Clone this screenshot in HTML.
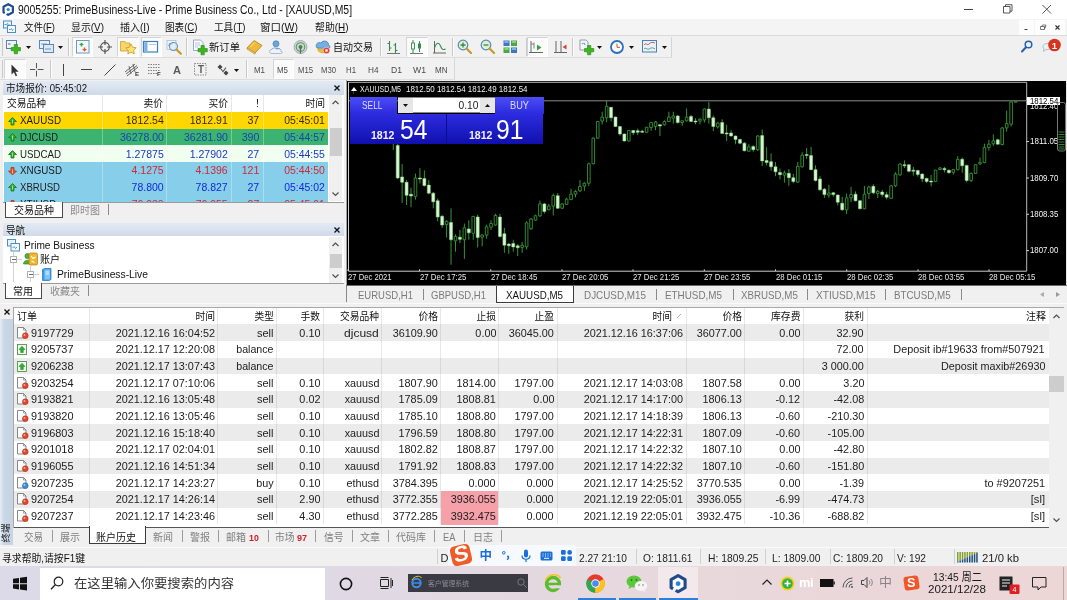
<!DOCTYPE html><html lang="zh-CN"><head><meta charset="utf-8"><title>MT4</title><style>
*{box-sizing:border-box;margin:0;padding:0}
html,body{width:1067px;height:600px;overflow:hidden;background:#f0f0f0}
body{font-family:"Liberation Sans","Noto Sans CJK SC",sans-serif;font-size:11px;color:#000;position:relative}
.a{position:absolute;white-space:nowrap}
.t{position:absolute;white-space:nowrap;line-height:1}
svg{position:absolute;overflow:visible}
svg text{font-family:"Liberation Sans","Noto Sans CJK SC",sans-serif}
</style></head><body><div id="w" style="position:absolute;left:0;top:0;width:1067px;height:600px;will-change:transform">
<div class="a" style="left:0px;top:0px;width:1067px;height:19px;background:#ffffff;"></div>
<svg class="a" style="left:2px;top:2.8px;width:12.4px;height:13px;" viewBox="0 0 12.4 13"><path d="M6.20 1.10L10.88 3.80L10.88 9.20L6.20 11.90L1.52 9.20L1.52 3.80z" fill="#fff" stroke="#1f4a8c" stroke-width="2.2" stroke-linejoin="round"/><path d="M5.20 8.10L2.17 12.95" stroke="#ffffff" stroke-width="2.09"/><path d="M5.20 8.10L3.86 10.24" stroke="#fff" stroke-width="2.09"/><circle cx="6.2" cy="6.5" r="1.625" fill="#2b82d9"/></svg>
<div class="t" style="top:3.7px;font-size:12px;color:#111;left:17.6px;transform:scaleX(0.865);transform-origin:left;">9005255: PrimeBusiness-Live - Prime Business Co., Ltd - [XAUUSD,M5]</div>
<svg class="a" style="left:960px;top:0px;width:107px;height:19px;" viewBox="0 0 107 19"><path d="M4 9.5h9" stroke="#444" stroke-width="1" fill="none"/><path d="M43.5 6.5h6.5v6.5h-6.5z M45.5 6.5v-1.8h6.5v6.5h-2" stroke="#444" stroke-width="0.9" fill="none"/><path d="M82.5 5l8.5 8.5m0-8.5l-8.5 8.5" stroke="#444" stroke-width="0.9" fill="none"/></svg>
<div class="a" style="left:0px;top:19px;width:1067px;height:17px;background:#f4f4f4;border-bottom:1px solid #dadada"></div>
<svg class="a" style="left:3px;top:20px;width:13px;height:14px;" viewBox="0 0 13 14"><rect x="0.5" y="1" width="8" height="7" fill="#eaf3fb" stroke="#4d8fcb" stroke-width="1"/><rect x="4.5" y="5.5" width="8" height="7" fill="#f4f9fd" stroke="#4d8fcb" stroke-width="1"/><path d="M1.5 4.5h2l1-1 1 2 1-1M6 9.5h1.5l1-1 1 2 1-1" stroke="#2c6fb3" stroke-width=".7" fill="none"/></svg>
<div class="t" style="top:21.5px;font-size:10.5px;color:#111;left:24px;transform:scaleX(0.901);transform-origin:left;">文件(<u>F</u>)</div>
<div class="t" style="top:21.5px;font-size:10.5px;color:#111;left:71px;transform:scaleX(0.942);transform-origin:left;">显示(<u>V</u>)</div>
<div class="t" style="top:21.5px;font-size:10.5px;color:#111;left:120px;transform:scaleX(0.954);transform-origin:left;">插入(<u>I</u>)</div>
<div class="t" style="top:21.5px;font-size:10.5px;color:#111;left:165px;transform:scaleX(0.913);transform-origin:left;">图表(<u>C</u>)</div>
<div class="t" style="top:21.5px;font-size:10.5px;color:#111;left:214px;transform:scaleX(0.915);transform-origin:left;">工具(<u>T</u>)</div>
<div class="t" style="top:21.5px;font-size:10.5px;color:#111;left:260px;">窗口(<u>W</u>)</div>
<div class="t" style="top:21.5px;font-size:10.5px;color:#111;left:314.5px;transform:scaleX(0.941);transform-origin:left;">帮助(<u>H</u>)</div>
<div class="a" style="left:1019px;top:20px;width:15px;height:15px;background:#fdfdfd;"></div>
<div class="a" style="left:1035px;top:20px;width:15px;height:15px;background:#fdfdfd;"></div>
<div class="a" style="left:1050px;top:20px;width:15px;height:15px;background:#fdfdfd;"></div>
<svg class="a" style="left:1019px;top:20px;width:48px;height:15px;" viewBox="0 0 48 15"><path d="M5.5 9.5h3" stroke="#444" stroke-width="1"/><path d="M21.5 6.5h4v3h-4z M22.5 6.5l1-1.5h3.5l-.8 3h-1" stroke="#444" stroke-width=".7" fill="none"/><path d="M36.5 5.5l4 4m0-4l-4 4" stroke="#333" stroke-width="1.1"/></svg>
<div class="a" style="left:0px;top:36px;width:1067px;height:22px;background:#f0f0f0;"></div>
<div class="a" style="left:0px;top:36px;width:672px;height:22px;background:#f1f1f1;border-bottom:1px solid #dddddd"></div>
<div class="a" style="left:2px;top:38px;width:1px;height:18px;background:#c9c9c9;"></div>
<div class="a" style="left:671px;top:37px;width:1px;height:20px;background:#d5d5d5;"></div>
<svg class="a" style="left:6px;top:40px;width:16px;height:14px;" viewBox="0 0 16 14"><rect x="0.5" y="0.5" width="10" height="8" fill="#eef4fa" stroke="#5b7fa6"/><path d="M2 3h2.5v2H2z" fill="#5b7fa6" opacity=".6"/><path d="M7 6h3.5v-0h0v3.5h3.5v3.5h-3.5v0h0v0h0h-3.5v0h0v-0h-0z" fill="none"/><path d="M8.2 4.5h3.3v3h3v3.3h-3v3h-3.3v-3h-3v-3.3h3z" fill="#3cb521" stroke="#1f8a0f" stroke-width=".6"/></svg>
<svg class="a" style="left:26px;top:46px;width:5px;height:3px;" viewBox="0 0 5 3"><path d="M0 0h5l-2.5 3z" fill="#111"/></svg>
<svg class="a" style="left:39px;top:40px;width:16px;height:14px;" viewBox="0 0 16 14"><rect x="0.5" y="0.5" width="10" height="8" fill="#e9f1f9" stroke="#5b86b5"/><rect x="4.5" y="4.5" width="10" height="8" fill="#dce9f5" stroke="#5b86b5"/><path d="M2 4h6M6 9h6" stroke="#5b86b5" stroke-width=".8"/></svg>
<svg class="a" style="left:58px;top:46px;width:5px;height:3px;" viewBox="0 0 5 3"><path d="M0 0h5l-2.5 3z" fill="#111"/></svg>
<div class="a" style="left:68px;top:38px;width:1px;height:18px;background:#c8c8c8;"></div>
<div class="a" style="left:69px;top:38px;width:1px;height:18px;background:#fdfdfd;"></div>
<div class="a" style="left:72px;top:37px;width:21px;height:20px;background:#fbfbfb;border:1px solid #d4d4d4;border-right-color:#fff;border-bottom-color:#fff"></div>
<svg class="a" style="left:76px;top:40px;width:14px;height:14px;" viewBox="0 0 14 14"><rect x="0.5" y="0.5" width="12.5" height="12.5" fill="#f3f8fc" stroke="#6c9bc9"/><path d="M3 5l2.5-2.5L8 5H6.3v1.5H4.7V5z" fill="#3aa935"/><path d="M6 9l2.500 2.5L11 9H9.300V7.500H7.700V9z" fill="#e2562b"/></svg>
<svg class="a" style="left:98px;top:40px;width:14px;height:14px;" viewBox="0 0 14 14"><circle cx="7" cy="7" r="4.3" fill="none" stroke="#555" stroke-width="1.2"/><path d="M7 0v5M7 9v5M0 7h5M9 7h5" stroke="#555" stroke-width="1.2"/></svg>
<div class="a" style="left:117px;top:37px;width:22px;height:20px;background:#fbfbfb;border:1px solid #d4d4d4;border-right-color:#fff;border-bottom-color:#fff"></div>
<svg class="a" style="left:120px;top:39px;width:17px;height:15px;" viewBox="0 0 17 15"><path d="M0.5 2.500h4.500l1 1.500h4v8h-9.500z" fill="#f7d56b" stroke="#c9a227" stroke-width=".8"/><path d="M11 5l1.600 3.300 3.600.500-2.600 2.500.600 3.600-3.200-1.700-3.200 1.700.600-3.600-2.600-2.500 3.600-.500z" fill="#fbe27a" stroke="#c59a1c" stroke-width=".8"/></svg>
<div class="a" style="left:141px;top:37px;width:21px;height:20px;background:#fbfbfb;border:1px solid #d4d4d4;border-right-color:#fff;border-bottom-color:#fff"></div>
<svg class="a" style="left:143px;top:41px;width:16px;height:12px;" viewBox="0 0 16 12"><rect x="0.5" y="0.5" width="14" height="10.500" fill="#ffffff" stroke="#3f7fbe" stroke-width="1.2"/><rect x="1.2" y="1.2" width="3.300" height="9.200" fill="#7fb2e0"/><path d="M6 3.500h7" stroke="#9fb9d3" stroke-width=".8"/></svg>
<svg class="a" style="left:166px;top:40px;width:17px;height:15px;" viewBox="0 0 17 15"><rect x="1" y="0.500" width="9" height="9" fill="#eef4fa" stroke="#a9bfd6" stroke-width=".8"/><path d="M2.500 6l1.500-3 1.500 2 1.500-3" stroke="#4f86c0" stroke-width=".8" fill="none"/><circle cx="7.500" cy="6.500" r="4" fill="#d9ecfb" fill-opacity=".6" stroke="#6b8fb5" stroke-width="1.100"/><path d="M10.500 9.500l4.300 4.300" stroke="#c89a2e" stroke-width="2.200" stroke-linecap="round"/></svg>
<div class="a" style="left:186px;top:38px;width:1px;height:18px;background:#c8c8c8;"></div>
<div class="a" style="left:187px;top:38px;width:1px;height:18px;background:#fdfdfd;"></div>
<svg class="a" style="left:192px;top:39px;width:16px;height:16px;" viewBox="0 0 16 16"><path d="M1.500 1h7l2.500 2.500v8h-9.500z" fill="#fafcfe" stroke="#7f99b5" stroke-width=".8"/><path d="M3 4h5M3 6h5M3 8h3" stroke="#9ab1c9" stroke-width=".7"/><path d="M9 6.500h3.300v3h3v3.300h-3v3h-3.300v-3h-3v-3.300h3z" fill="#3cb521" stroke="#1f8a0f" stroke-width=".6"/></svg>
<div class="t" style="top:41.5px;font-size:10.5px;color:#111;left:209px;transform:scaleX(0.984);transform-origin:left;">新订单</div>
<svg class="a" style="left:246px;top:40px;width:17px;height:14px;" viewBox="0 0 17 14"><path d="M1 8l7-7.500 8 5-7 7.500z" fill="#f0b93a" stroke="#b07d12" stroke-width=".8"/><path d="M1 8l8 5v1.200l-8-5z" fill="#fff4cf" stroke="#b07d12" stroke-width=".6"/><path d="M4.500 7l4.500-4.800" stroke="#fbe08a" stroke-width="1"/></svg>
<svg class="a" style="left:269px;top:40px;width:16px;height:14px;" viewBox="0 0 16 14"><circle cx="7" cy="3.800" r="3" fill="#6ea6dc" stroke="#3b78b8" stroke-width=".7"/><path d="M2.500 9.500c0-2.500 9-2.500 9 0v1.500h-9z" fill="#4f8fd0"/><path d="M3 13.500c-3.500 0-3.500-4 0-4 .5-2 4-2 4.500-.3 3-1.200 5 .8 4.500 2.300 2 0 2 2-.5 2z" fill="#eef3f8" stroke="#8ea4bb" stroke-width=".7"/></svg>
<svg class="a" style="left:293px;top:40px;width:15px;height:14px;" viewBox="0 0 15 14"><circle cx="7.500" cy="7" r="6.500" fill="#cfd5da" stroke="#8d979f" stroke-width=".7"/><circle cx="7.500" cy="7" r="4.300" fill="none" stroke="#5d9c5a" stroke-width="1.100"/><circle cx="7.500" cy="7" r="2" fill="#3f8f3c"/><path d="M7.500 7v6.500" stroke="#5a646c" stroke-width="1.200"/></svg>
<svg class="a" style="left:315px;top:39px;width:16px;height:15px;" viewBox="0 0 16 15"><path d="M2 9c-2.500-3 1-7 4-5 2-3.500 8-2 7.500 2 2.500 1 1.500 4-1 3.500z" fill="#74aee6" stroke="#3c78b8" stroke-width=".7"/><path d="M3 8.500c2 3 8 3 10.500 0v3c-2 3-8.500 3-10.500 0z" fill="#f2c230" stroke="#b68a12" stroke-width=".6"/><circle cx="11.500" cy="11.500" r="3.300" fill="#e03a2a" stroke="#fff" stroke-width=".5"/><rect x="10.300" y="10.300" width="2.400" height="2.400" fill="#fff"/></svg>
<div class="t" style="top:41.5px;font-size:10.5px;color:#111;left:333px;transform:scaleX(0.952);transform-origin:left;">自动交易</div>
<div class="a" style="left:380px;top:38px;width:1px;height:18px;background:#c8c8c8;"></div>
<div class="a" style="left:381px;top:38px;width:1px;height:18px;background:#fdfdfd;"></div>
<svg class="a" style="left:387px;top:40px;width:13px;height:14px;" viewBox="0 0 13 14"><path d="M2.500 1v10M2.500 3.500h-2M2.500 8h2M8.500 3v10M8.500 5h-2M8.500 10.500h2" stroke="#2f8f4a" stroke-width="1.100" fill="none"/><path d="M0 13.500h13" stroke="#555" stroke-width=".8"/></svg>
<div class="a" style="left:406px;top:37px;width:22px;height:20px;background:#fbfbfb;border:1px solid #d4d4d4;border-right-color:#fff;border-bottom-color:#fff"></div>
<svg class="a" style="left:410px;top:40px;width:14px;height:14px;" viewBox="0 0 14 14"><path d="M3 0v13M9.500 1v11" stroke="#2f8f4a" stroke-width="1"/><rect x="1.500" y="3" width="3" height="6" fill="#fff" stroke="#2f8f4a" stroke-width=".9"/><rect x="8" y="3.500" width="3" height="5" fill="#2f8f4a"/><path d="M0 13.500h13" stroke="#555" stroke-width=".8"/></svg>
<svg class="a" style="left:433px;top:40px;width:14px;height:14px;" viewBox="0 0 14 14"><path d="M1.500 1v12M0 13h13" stroke="#555" stroke-width=".9" fill="none"/><path d="M1.500 8c2-6 4.500-6 6-2s3 4 5 3" stroke="#2f8f4a" stroke-width="1.100" fill="none"/></svg>
<div class="a" style="left:452px;top:38px;width:1px;height:18px;background:#c8c8c8;"></div>
<div class="a" style="left:453px;top:38px;width:1px;height:18px;background:#fdfdfd;"></div>
<svg class="a" style="left:457px;top:39px;width:16px;height:16px;" viewBox="0 0 16 16"><circle cx="6" cy="6" r="4.800" fill="#dff0d8" stroke="#5b86b5" stroke-width="1.200"/><path d="M3.500 6h5M6 3.500v5" stroke="#2f8f3a" stroke-width="1.300"/><path d="M9.800 9.800l4.200 4.200" stroke="#c89a2e" stroke-width="2.300" stroke-linecap="round"/></svg>
<svg class="a" style="left:480px;top:39px;width:16px;height:16px;" viewBox="0 0 16 16"><circle cx="6" cy="6" r="4.800" fill="#dff0d8" stroke="#5b86b5" stroke-width="1.200"/><path d="M3.500 6h5" stroke="#2f8f3a" stroke-width="1.300"/><path d="M9.800 9.800l4.200 4.200" stroke="#c89a2e" stroke-width="2.300" stroke-linecap="round"/></svg>
<svg class="a" style="left:503px;top:40px;width:15px;height:14px;" viewBox="0 0 15 14"><rect x="0.500" y="0.500" width="6" height="5.500" fill="#3a78c2"/><rect x="8" y="0.500" width="6" height="5.500" fill="#4aa83f"/><rect x="0.500" y="7.500" width="6" height="5.500" fill="#4aa83f"/><rect x="8" y="7.500" width="6" height="5.500" fill="#3a78c2"/><path d="M1.500 2h4M9 2h4M1.500 9h4M9 9h4" stroke="#fff" stroke-width=".8"/></svg>
<div class="a" style="left:526px;top:38px;width:1px;height:18px;background:#c8c8c8;"></div>
<div class="a" style="left:527px;top:38px;width:1px;height:18px;background:#fdfdfd;"></div>
<div class="a" style="left:526.5px;top:37px;width:21.5px;height:20px;background:#fbfbfb;border:1px solid #d4d4d4;border-right-color:#fff;border-bottom-color:#fff"></div>
<svg class="a" style="left:529px;top:40px;width:14px;height:14px;" viewBox="0 0 14 14"><path d="M2 1v11M0 12.500h14" stroke="#555" stroke-width=".9" fill="none"/><path d="M2 4h3M5 2.500v6" stroke="#666" stroke-width=".8"/><path d="M8 4.500l4.500 3-4.500 3z" fill="#2fa83a"/></svg>
<svg class="a" style="left:554px;top:40px;width:13px;height:14px;" viewBox="0 0 13 14"><path d="M2 1v11M0 12.500h13M7 1v11" stroke="#555" stroke-width=".9" fill="none"/><path d="M12.500 4.500l-4 2.500 4 2.500z" fill="#d0452f"/></svg>
<div class="a" style="left:572px;top:38px;width:1px;height:18px;background:#c8c8c8;"></div>
<div class="a" style="left:573px;top:38px;width:1px;height:18px;background:#fdfdfd;"></div>
<svg class="a" style="left:579px;top:39px;width:15px;height:16px;" viewBox="0 0 15 16"><path d="M1 1h6l2 2v8h-8z" fill="#f4f6f8" stroke="#7d8b99" stroke-width=".8"/><path d="M3 4c1 3 2-3 3 2" stroke="#3b78b8" stroke-width=".8" fill="none"/><path d="M8.500 6.500h3.300v3h3v3.300h-3v3h-3.300v-3h-3v-3.300h3z" fill="#3cb521" stroke="#1f8a0f" stroke-width=".6"/></svg>
<svg class="a" style="left:597px;top:46px;width:5px;height:3px;" viewBox="0 0 5 3"><path d="M0 0h5l-2.5 3z" fill="#111"/></svg>
<svg class="a" style="left:610px;top:40px;width:14px;height:14px;" viewBox="0 0 14 14"><circle cx="7" cy="7" r="6" fill="#fff" stroke="#2d6fc0" stroke-width="1.800"/><path d="M7 3.500v3.800h3" stroke="#c0392b" stroke-width=".9" fill="none"/></svg>
<svg class="a" style="left:629px;top:46px;width:5px;height:3px;" viewBox="0 0 5 3"><path d="M0 0h5l-2.5 3z" fill="#111"/></svg>
<svg class="a" style="left:642px;top:40px;width:15px;height:13px;" viewBox="0 0 15 13"><rect x="0.500" y="0.500" width="14" height="11.500" fill="#e8f0f8" stroke="#4a7fb8" stroke-width="1"/><path d="M2 5c2-3 3 1 5-1s3-2 6-1" stroke="#c0392b" stroke-width=".8" fill="none"/><path d="M2 9c2-2 3 1 5 0s3-2 6 0" stroke="#2f8f4a" stroke-width=".8" fill="none"/></svg>
<svg class="a" style="left:661.5px;top:46px;width:5px;height:3px;" viewBox="0 0 5 3"><path d="M0 0h5l-2.5 3z" fill="#111"/></svg>
<svg class="a" style="left:1021px;top:40px;width:12px;height:13px;" viewBox="0 0 12 13"><circle cx="7.500" cy="4.500" r="3.300" fill="#e9f1fb" stroke="#2b5fae" stroke-width="1.500"/><path d="M5 7.300l-4 4.200" stroke="#2b5fae" stroke-width="2" stroke-linecap="round"/></svg>
<svg class="a" style="left:1042px;top:38px;width:21px;height:16px;" viewBox="0 0 21 16"><path d="M1 8.500c0-4 8-4 8 0 0 2.500-3 3.500-5 3l-2.500 2 .500-2.600c-.700-.600-1-1.400-1-2.400z" fill="#eef1f4" stroke="#9aa7b3" stroke-width=".7"/><circle cx="12.500" cy="7" r="6.300" fill="#d8331f"/><text x="12.500" y="10.500" font-size="9.500" font-weight="bold" text-anchor="middle" fill="#fff">1</text></svg>
<div class="a" style="left:0px;top:58px;width:1067px;height:23px;background:#f0f0f0;"></div>
<div class="a" style="left:0px;top:58px;width:455px;height:22px;background:#f1f1f1;border-bottom:1px solid #dddddd;border-right:1px solid #d8d8d8"></div>
<div class="a" style="left:2px;top:60px;width:1px;height:18px;background:#c9c9c9;"></div>
<div class="a" style="left:4px;top:59px;width:22px;height:20px;background:#fbfbfb;border:1px solid #d4d4d4;border-right-color:#fff;border-bottom-color:#fff"></div>
<svg class="a" style="left:10.5px;top:63.5px;width:9px;height:14px;" viewBox="0 0 9 14"><path d="M0.500 0.500v10l2.400-2.200 1.800 3.900 1.500-.700-1.800-3.800h3.300z" fill="#333"/></svg>
<svg class="a" style="left:30px;top:63px;width:14px;height:14px;" viewBox="0 0 14 14"><path d="M6.500 0v5.300M6.500 7.700v5.800M0 6.500h5.300M7.700 6.500h5.800" stroke="#555" stroke-width="1"/></svg>
<div class="a" style="left:50px;top:60px;width:1px;height:18px;background:#c8c8c8;"></div>
<div class="a" style="left:51px;top:60px;width:1px;height:18px;background:#fdfdfd;"></div>
<div class="a" style="left:63px;top:64px;width:1px;height:12px;background:#444;"></div>
<div class="a" style="left:81px;top:69px;width:11px;height:1px;background:#444;"></div>
<svg class="a" style="left:104px;top:64px;width:12px;height:12px;" viewBox="0 0 12 12"><path d="M0.500 11.500l11-11" stroke="#444" stroke-width="1"/></svg>
<svg class="a" style="left:125px;top:63px;width:14px;height:14px;" viewBox="0 0 14 14"><path d="M0 9l10-8M2 13l11-9M1 11l11-8.500" stroke="#555" stroke-width=".9"/><path d="M4 3l2 8M8 1l2 8" stroke="#555" stroke-width=".8"/></svg>
<div class="t" style="top:70.5px;font-size:6px;color:#333;font-weight:bold;left:135px;">E</div>
<svg class="a" style="left:148px;top:63px;width:13px;height:13px;" viewBox="0 0 13 13"><path d="M0 1.500h12M0 4.500h12M0 7.500h12M0 10.500h9" stroke="#666" stroke-width=".8" stroke-dasharray="1.500 1"/></svg>
<div class="t" style="top:71px;font-size:6px;color:#333;font-weight:bold;left:157px;">F</div>
<div class="t" style="top:64.5px;font-size:11px;color:#5a5a5a;font-weight:bold;left:173px;transform:scaleX(1.006);transform-origin:left;">A</div>
<svg class="a" style="left:194px;top:63px;width:13px;height:13px;" viewBox="0 0 13 13"><rect x="0.500" y="0.500" width="11.500" height="11.500" fill="none" stroke="#777" stroke-width=".8" stroke-dasharray="1.500 1"/></svg>
<div class="t" style="top:65px;font-size:10px;color:#5a5a5a;font-weight:bold;left:197.5px;transform:scaleX(0.982);transform-origin:left;">T</div>
<svg class="a" style="left:217px;top:64px;width:12px;height:12px;" viewBox="0 0 12 12"><path d="M3 0.500l2.500 2.500-2.500 2.500-2.500-2.500z" fill="#444"/><path d="M9 6.500l2.500 2.500-2.500 2.500-2.500-2.500z" fill="#444"/><path d="M4 5l2 2.500 3-4" stroke="#555" stroke-width="1.100" fill="none"/></svg>
<svg class="a" style="left:234px;top:68.5px;width:5px;height:3px;" viewBox="0 0 5 3"><path d="M0 0h5l-2.5 3z" fill="#111"/></svg>
<div class="a" style="left:246px;top:60px;width:1px;height:18px;background:#c8c8c8;"></div>
<div class="a" style="left:247px;top:60px;width:1px;height:18px;background:#fdfdfd;"></div>
<div class="a" style="left:273px;top:59px;width:21px;height:20px;background:#fbfbfb;border:1px solid #d4d4d4;border-right-color:#fff;border-bottom-color:#fff"></div>
<div class="t" style="top:65.5px;font-size:8.5px;color:#4a4a4a;left:254px;transform:scaleX(0.931);transform-origin:left;">M1</div>
<div class="t" style="top:65.5px;font-size:8.5px;color:#4a4a4a;left:277px;transform:scaleX(0.931);transform-origin:left;">M5</div>
<div class="t" style="top:65.5px;font-size:8.5px;color:#4a4a4a;left:298px;transform:scaleX(0.907);transform-origin:left;">M15</div>
<div class="t" style="top:65.5px;font-size:8.5px;color:#4a4a4a;left:321px;transform:scaleX(0.907);transform-origin:left;">M30</div>
<div class="t" style="top:65.5px;font-size:8.5px;color:#4a4a4a;left:346px;transform:scaleX(0.920);transform-origin:left;">H1</div>
<div class="t" style="top:65.5px;font-size:8.5px;color:#4a4a4a;left:367.5px;transform:scaleX(0.966);transform-origin:left;">H4</div>
<div class="t" style="top:65.5px;font-size:8.5px;color:#4a4a4a;left:391px;transform:scaleX(1.011);transform-origin:left;">D1</div>
<div class="t" style="top:65.5px;font-size:8.5px;color:#4a4a4a;left:413px;transform:scaleX(1.020);transform-origin:left;">W1</div>
<div class="t" style="top:65.5px;font-size:8.5px;color:#4a4a4a;left:435px;transform:scaleX(0.945);transform-origin:left;">MN</div>
<div class="a" style="left:3px;top:81px;width:341px;height:13.5px;background:linear-gradient(#e3eaf4,#cfdae8);"></div>
<div class="t" style="top:83px;font-size:10.5px;color:#111;left:6px;transform:scaleX(0.913);transform-origin:left;">市场报价: 05:45:02</div>
<svg class="a" style="left:334px;top:85px;width:6px;height:6px;" viewBox="0 0 6 6"><path d="M0.500 0.500l5 5m0-5l-5 5" stroke="#111" stroke-width="1.300"/></svg>
<div class="a" style="left:3px;top:94.5px;width:341px;height:107.5px;background:#ffffff;"></div>
<div class="t" style="top:98.2px;font-size:10.5px;color:#111;left:7px;transform:scaleX(0.929);transform-origin:left;">交易品种</div>
<div class="t" style="top:98.2px;font-size:10.5px;color:#111;right:904px;transform:scaleX(0.929);transform-origin:right;">卖价</div>
<div class="t" style="top:98.2px;font-size:10.5px;color:#111;right:839.5px;transform:scaleX(0.929);transform-origin:right;">买价</div>
<div class="t" style="top:98.2px;font-size:10.5px;color:#111;left:256px;">!</div>
<div class="t" style="top:98.2px;font-size:10.5px;color:#111;right:742.5px;transform:scaleX(0.929);transform-origin:right;">时间</div>
<div class="a" style="left:101.5px;top:95px;width:1px;height:17px;background:#e6e6e6;"></div>
<div class="a" style="left:166px;top:95px;width:1px;height:17px;background:#e6e6e6;"></div>
<div class="a" style="left:231px;top:95px;width:1px;height:17px;background:#e6e6e6;"></div>
<div class="a" style="left:263px;top:95px;width:1px;height:17px;background:#e6e6e6;"></div>
<div class="a" style="left:3.500px;top:112px;width:324.500px;height:89.500px;overflow:hidden">
<div class="a" style="left:0;top:0px;width:326px;height:16.97px;background:#ffd700"></div>
<div class="a" style="left:98px;top:0px;width:1px;height:16.67px;background:rgba(255,255,255,.3)"></div>
<div class="a" style="left:162.5px;top:0px;width:1px;height:16.67px;background:rgba(255,255,255,.3)"></div>
<div class="a" style="left:227.5px;top:0px;width:1px;height:16.67px;background:rgba(255,255,255,.3)"></div>
<div class="a" style="left:259.5px;top:0px;width:1px;height:16.67px;background:rgba(255,255,255,.3)"></div>
<svg class="a" style="left:4px;top:4.5px;width:9px;height:9px" viewBox="0 0 9 9"><path d="M4.500 0.500L8.500 4.500H6V8H3V4.500H0.500z" fill="#2fae2f" stroke="#1c7a1c" stroke-width=".8"/><path d="M4.500 2.500v4" stroke="#fff" stroke-width=".8" opacity=".7"/></svg>
<div class="a" style="left:0;top:16.67px;width:326px;height:16.97px;background:#3cb371"></div>
<div class="a" style="left:98px;top:16.67px;width:1px;height:16.67px;background:rgba(255,255,255,.3)"></div>
<div class="a" style="left:162.5px;top:16.67px;width:1px;height:16.67px;background:rgba(255,255,255,.3)"></div>
<div class="a" style="left:227.5px;top:16.67px;width:1px;height:16.67px;background:rgba(255,255,255,.3)"></div>
<div class="a" style="left:259.5px;top:16.67px;width:1px;height:16.67px;background:rgba(255,255,255,.3)"></div>
<svg class="a" style="left:4px;top:21.17px;width:9px;height:9px" viewBox="0 0 9 9"><path d="M4.500 0.500L8.500 4.500H6V8H3V4.500H0.500z" fill="#2fae2f" stroke="#1c7a1c" stroke-width=".8"/><path d="M4.500 2.500v4" stroke="#fff" stroke-width=".8" opacity=".7"/></svg>
<div class="a" style="left:0;top:33.34px;width:326px;height:16.97px;background:#f0fff0"></div>
<div class="a" style="left:98px;top:33.34px;width:1px;height:16.67px;background:rgba(255,255,255,.3)"></div>
<div class="a" style="left:162.5px;top:33.34px;width:1px;height:16.67px;background:rgba(255,255,255,.3)"></div>
<div class="a" style="left:227.5px;top:33.34px;width:1px;height:16.67px;background:rgba(255,255,255,.3)"></div>
<div class="a" style="left:259.5px;top:33.34px;width:1px;height:16.67px;background:rgba(255,255,255,.3)"></div>
<svg class="a" style="left:4px;top:37.84px;width:9px;height:9px" viewBox="0 0 9 9"><path d="M4.500 0.500L8.500 4.500H6V8H3V4.500H0.500z" fill="#2fae2f" stroke="#1c7a1c" stroke-width=".8"/><path d="M4.500 2.500v4" stroke="#fff" stroke-width=".8" opacity=".7"/></svg>
<div class="a" style="left:0;top:50.01px;width:326px;height:16.97px;background:#87ceeb"></div>
<div class="a" style="left:98px;top:50.01px;width:1px;height:16.67px;background:rgba(255,255,255,.3)"></div>
<div class="a" style="left:162.5px;top:50.01px;width:1px;height:16.67px;background:rgba(255,255,255,.3)"></div>
<div class="a" style="left:227.5px;top:50.01px;width:1px;height:16.67px;background:rgba(255,255,255,.3)"></div>
<div class="a" style="left:259.5px;top:50.01px;width:1px;height:16.67px;background:rgba(255,255,255,.3)"></div>
<svg class="a" style="left:4px;top:54.51px;width:9px;height:9px" viewBox="0 0 9 9"><path d="M4.500 8L8.500 4H6V0.500H3V4H0.500z" fill="#e2542a" stroke="#a9381a" stroke-width=".8"/><path d="M4.500 2.500v4" stroke="#fff" stroke-width=".8" opacity=".7"/></svg>
<div class="a" style="left:0;top:66.68px;width:326px;height:16.97px;background:#87ceeb"></div>
<div class="a" style="left:98px;top:66.68px;width:1px;height:16.67px;background:rgba(255,255,255,.3)"></div>
<div class="a" style="left:162.5px;top:66.68px;width:1px;height:16.67px;background:rgba(255,255,255,.3)"></div>
<div class="a" style="left:227.5px;top:66.68px;width:1px;height:16.67px;background:rgba(255,255,255,.3)"></div>
<div class="a" style="left:259.5px;top:66.68px;width:1px;height:16.67px;background:rgba(255,255,255,.3)"></div>
<svg class="a" style="left:4px;top:71.18px;width:9px;height:9px" viewBox="0 0 9 9"><path d="M4.500 0.500L8.500 4.500H6V8H3V4.500H0.500z" fill="#2fae2f" stroke="#1c7a1c" stroke-width=".8"/><path d="M4.500 2.500v4" stroke="#fff" stroke-width=".8" opacity=".7"/></svg>
<div class="a" style="left:0;top:83.35px;width:326px;height:16.97px;background:#87ceeb"></div>
<div class="a" style="left:98px;top:83.35px;width:1px;height:16.67px;background:rgba(255,255,255,.3)"></div>
<div class="a" style="left:162.5px;top:83.35px;width:1px;height:16.67px;background:rgba(255,255,255,.3)"></div>
<div class="a" style="left:227.5px;top:83.35px;width:1px;height:16.67px;background:rgba(255,255,255,.3)"></div>
<div class="a" style="left:259.5px;top:83.35px;width:1px;height:16.67px;background:rgba(255,255,255,.3)"></div>
<svg class="a" style="left:4px;top:87.85px;width:9px;height:9px" viewBox="0 0 9 9"><path d="M4.500 8L8.500 4H6V0.500H3V4H0.500z" fill="#e2542a" stroke="#a9381a" stroke-width=".8"/><path d="M4.500 2.500v4" stroke="#fff" stroke-width=".8" opacity=".7"/></svg>
</div>
<div class="t" style="top:115.2px;font-size:11px;color:#1a1a1a;left:20px;transform:scaleX(0.894);transform-origin:left;">XAUUSD</div>
<div class="t" style="top:115.2px;font-size:11px;color:#3b2a00;right:903.5px;transform:scaleX(0.956);transform-origin:right;">1812.54</div>
<div class="t" style="top:115.2px;font-size:11px;color:#3b2a00;right:839.5px;transform:scaleX(0.956);transform-origin:right;">1812.91</div>
<div class="t" style="top:115.2px;font-size:11px;color:#3b2a00;right:807.5px;transform:scaleX(0.963);transform-origin:right;">37</div>
<div class="t" style="top:115.2px;font-size:11px;color:#3b2a00;right:742.5px;transform:scaleX(0.948);transform-origin:right;">05:45:01</div>
<div class="t" style="top:131.87px;font-size:11px;color:#1a1a1a;left:20px;transform:scaleX(0.852);transform-origin:left;">DJCUSD</div>
<div class="t" style="top:131.87px;font-size:11px;color:#1746a8;right:903.5px;transform:scaleX(0.957);transform-origin:right;">36278.00</div>
<div class="t" style="top:131.87px;font-size:11px;color:#1746a8;right:839.5px;transform:scaleX(0.957);transform-origin:right;">36281.90</div>
<div class="t" style="top:131.87px;font-size:11px;color:#1746a8;right:807.5px;transform:scaleX(0.964);transform-origin:right;">390</div>
<div class="t" style="top:131.87px;font-size:11px;color:#1746a8;right:742.5px;transform:scaleX(0.948);transform-origin:right;">05:44:57</div>
<div class="t" style="top:148.54px;font-size:11px;color:#1a1a1a;left:20px;transform:scaleX(0.883);transform-origin:left;">USDCAD</div>
<div class="t" style="top:148.54px;font-size:11px;color:#1f35c8;right:903.5px;transform:scaleX(0.956);transform-origin:right;">1.27875</div>
<div class="t" style="top:148.54px;font-size:11px;color:#1f35c8;right:839.5px;transform:scaleX(0.956);transform-origin:right;">1.27902</div>
<div class="t" style="top:148.54px;font-size:11px;color:#1f35c8;right:807.5px;transform:scaleX(0.963);transform-origin:right;">27</div>
<div class="t" style="top:148.54px;font-size:11px;color:#1f35c8;right:742.5px;transform:scaleX(0.948);transform-origin:right;">05:44:55</div>
<div class="t" style="top:165.21px;font-size:11px;color:#1a1a1a;left:20px;transform:scaleX(0.892);transform-origin:left;">XNGUSD</div>
<div class="t" style="top:165.21px;font-size:11px;color:#d02838;right:903.5px;transform:scaleX(0.954);transform-origin:right;">4.1275</div>
<div class="t" style="top:165.21px;font-size:11px;color:#d02838;right:839.5px;transform:scaleX(0.954);transform-origin:right;">4.1396</div>
<div class="t" style="top:165.21px;font-size:11px;color:#d02838;right:807.5px;transform:scaleX(0.964);transform-origin:right;">121</div>
<div class="t" style="top:165.21px;font-size:11px;color:#d02838;right:742.5px;transform:scaleX(0.948);transform-origin:right;">05:44:50</div>
<div class="t" style="top:181.88px;font-size:11px;color:#1a1a1a;left:20px;transform:scaleX(0.873);transform-origin:left;">XBRUSD</div>
<div class="t" style="top:181.88px;font-size:11px;color:#1228d8;right:903.5px;transform:scaleX(0.954);transform-origin:right;">78.800</div>
<div class="t" style="top:181.88px;font-size:11px;color:#1228d8;right:839.5px;transform:scaleX(0.954);transform-origin:right;">78.827</div>
<div class="t" style="top:181.88px;font-size:11px;color:#1228d8;right:807.5px;transform:scaleX(0.963);transform-origin:right;">27</div>
<div class="t" style="top:181.88px;font-size:11px;color:#1228d8;right:742.5px;transform:scaleX(0.948);transform-origin:right;">05:45:02</div>
<div class="a" style="left:0;top:195px;width:329px;height:6.500px;overflow:hidden">
<div class="t" style="top:3.55px;font-size:11px;color:#1a1a1a;left:20px;transform:scaleX(0.900);transform-origin:left;">XTIUSD</div>
<div class="t" style="top:3.55px;font-size:11px;color:#d02838;right:165.5px;transform:scaleX(0.950);transform-origin:right;">76.030</div>
<div class="t" style="top:3.55px;font-size:11px;color:#d02838;right:101.5px;transform:scaleX(0.950);transform-origin:right;">76.055</div>
<div class="t" style="top:3.55px;font-size:11px;color:#d02838;right:69.5px;transform:scaleX(0.950);transform-origin:right;">27</div>
<div class="t" style="top:3.55px;font-size:11px;color:#d02838;right:4.5px;transform:scaleX(0.950);transform-origin:right;">05:45:01</div>
</div>
<div class="a" style="left:329px;top:95px;width:13px;height:106px;background:#f0f0f0;"></div>
<div class="a" style="left:329.5px;top:128px;width:12px;height:28px;background:#cdcdcd;"></div>
<svg class="a" style="left:332px;top:100px;width:7px;height:4.5px;" viewBox="0 0 7 4.5"><path d="M0.500 4l3-3 3 3" stroke="#505050" stroke-width="1.200" fill="none"/></svg>
<svg class="a" style="left:332px;top:192px;width:7px;height:4.5px;" viewBox="0 0 7 4.5"><path d="M0.500 0.500l3 3 3-3" stroke="#505050" stroke-width="1.200" fill="none"/></svg>
<div class="a" style="left:3px;top:201.5px;width:341px;height:1px;background:#9a9a9a;"></div>
<div class="a" style="left:5px;top:201.5px;width:57.5px;height:16px;background:#ffffff;border:1px solid #4a4a4a;border-top:none"></div>
<div class="t" style="top:204.5px;font-size:10.5px;color:#111;left:13.5px;transform:scaleX(0.952);transform-origin:left;">交易品种</div>
<div class="t" style="top:204.5px;font-size:10.5px;color:#8a8a8a;left:70px;transform:scaleX(0.952);transform-origin:left;">即时图</div>
<div class="a" style="left:108px;top:204px;width:1px;height:11px;background:#8a8a8a;"></div>
<div class="a" style="left:3px;top:222.5px;width:341px;height:13.5px;background:linear-gradient(#e3eaf4,#cfdae8);"></div>
<div class="t" style="top:224.5px;font-size:10.5px;color:#111;left:6px;transform:scaleX(0.905);transform-origin:left;">导航</div>
<svg class="a" style="left:334px;top:226.5px;width:6px;height:6px;" viewBox="0 0 6 6"><path d="M0.500 0.500l5 5m0-5l-5 5" stroke="#111" stroke-width="1.300"/></svg>
<div class="a" style="left:3px;top:236px;width:341px;height:46.5px;background:#ffffff;"></div>
<div class="a" style="left:329px;top:236.5px;width:13px;height:46px;background:#f0f0f0;"></div>
<div class="a" style="left:329.5px;top:254px;width:12px;height:14px;background:#cdcdcd;"></div>
<svg class="a" style="left:332px;top:241.5px;width:7px;height:4.5px;" viewBox="0 0 7 4.5"><path d="M0.500 4l3-3 3 3" stroke="#505050" stroke-width="1.200" fill="none"/></svg>
<svg class="a" style="left:332px;top:273.5px;width:7px;height:4.5px;" viewBox="0 0 7 4.5"><path d="M0.500 0.500l3 3 3-3" stroke="#505050" stroke-width="1.200" fill="none"/></svg>
<svg class="a" style="left:7px;top:239px;width:13px;height:13px;" viewBox="0 0 13 13"><rect x="0.500" y="0.500" width="8" height="6.500" fill="#eaf3fb" stroke="#4d8fcb"/><rect x="4" y="4.500" width="8.500" height="7.500" fill="#f4f9fd" stroke="#4d8fcb"/><path d="M5.500 9l1.500-1.500 1.500 2 1.500-1.500" stroke="#2c6fb3" stroke-width=".7" fill="none"/></svg>
<div class="t" style="top:239.5px;font-size:11px;color:#111;left:24px;transform:scaleX(0.923);transform-origin:left;">Prime Business</div>
<div class="a" style="left:13px;top:252px;width:1px;height:30px;background:#d2d2d2;"></div>
<div class="a" style="left:13px;top:259px;width:9px;height:1px;background:#d2d2d2;"></div>
<div class="a" style="left:10px;top:256px;width:7px;height:7px;background:#fff;border:1px solid #b0b0b0"></div>
<div class="a" style="left:11.5px;top:259px;width:4px;height:1px;background:#666;"></div>
<svg class="a" style="left:23px;top:252px;width:15px;height:14px;" viewBox="0 0 15 14"><circle cx="4.500" cy="4" r="2.600" fill="#4fae3e" stroke="#2f7d24" stroke-width=".6"/><path d="M0.500 12c0-5 8-5 8 0z" fill="#4fae3e" stroke="#2f7d24" stroke-width=".6"/><rect x="6" y="1" width="8.500" height="12" rx="1.500" fill="#f2b52c" stroke="#b07d12" stroke-width=".7"/><path d="M8 4l2 2.500 2.500-1.500M8.500 9l3 1.500" stroke="#fff" stroke-width="1.100" fill="none"/></svg>
<div class="t" style="top:254px;font-size:10.5px;color:#111;left:40px;transform:scaleX(0.952);transform-origin:left;">账户</div>
<div class="a" style="left:30px;top:266px;width:1px;height:16px;background:#d2d2d2;"></div>
<div class="a" style="left:30px;top:274px;width:9px;height:1px;background:#d2d2d2;"></div>
<div class="a" style="left:27px;top:271px;width:7px;height:7px;background:#fff;border:1px solid #b0b0b0"></div>
<div class="a" style="left:28.5px;top:274px;width:4px;height:1px;background:#666;"></div>
<svg class="a" style="left:41px;top:267.5px;width:11px;height:13px;" viewBox="0 0 11 13"><path d="M1.500 1.500l2-1h6.500v11l-2 1h-6.500z" fill="#3f9be6" stroke="#1f6fc0" stroke-width=".7"/><rect x="3.500" y="1.500" width="5.500" height="10" fill="#7fc4f7"/><path d="M4.500 4h3.500M4.500 6h3.500" stroke="#fff" stroke-width=".8"/></svg>
<div class="t" style="top:268.5px;font-size:11px;color:#111;left:57px;transform:scaleX(0.936);transform-origin:left;">PrimeBusiness-Live</div>
<div class="a" style="left:3px;top:282.5px;width:341px;height:1px;background:#9a9a9a;"></div>
<div class="a" style="left:5px;top:282.5px;width:36.5px;height:16px;background:#ffffff;border:1px solid #4a4a4a;border-top:none"></div>
<div class="t" style="top:285.5px;font-size:10.5px;color:#111;left:13px;transform:scaleX(0.952);transform-origin:left;">常用</div>
<div class="t" style="top:285.5px;font-size:10.5px;color:#8a8a8a;left:50px;transform:scaleX(0.952);transform-origin:left;">收藏夹</div>
<div class="a" style="left:88px;top:285px;width:1px;height:11px;background:#8a8a8a;"></div>
<div class="a" style="left:346px;top:80px;width:1px;height:206px;background:#a0a0a0;"></div>
<div class="a" style="left:347px;top:80.5px;width:719px;height:204.5px;background:#000000;"></div>
<div class="a" style="left:1066px;top:80px;width:1px;height:206px;background:#e8e8e8;"></div>
<svg class="a" style="left:0;top:0;width:1067px;height:600px" viewBox="0 0 1067 600"><path d="M348.500 82.300H1026.700V271" stroke="#b8b8b8" stroke-width="1" fill="none"/><path d="M348.500 82V271.200H1026.700" stroke="#d0d0d0" stroke-width="1" fill="none"/><path d="M349 100.800H1027" stroke="#8c8c8c" stroke-width="1"/><path d="M348.0 269.300v1.700M419.5 269.300v1.700M490.8 269.300v1.700M562.0 269.300v1.700M633.0 269.300v1.700M704.3 269.300v1.700M775.5 269.300v1.700M846.7 269.300v1.700M918.0 269.300v1.700M989.0 269.300v1.700" stroke="#d0d0d0" stroke-width="1"/><path d="M1026.500 141.5h2.500M1026.500 178.0h2.500M1026.500 214.3h2.500M1026.500 250.6h2.500" stroke="#d0d0d0" stroke-width="1"/><path d="M393.250 144v6" stroke="#369636" stroke-width="1"/><path d="M397.70 144.00V179.05M402.14 163.86V202.91M406.59 180.13V205.08M411.03 187.72V207.25M415.48 173.62V177.96M415.48 196.40V199.65M419.93 168.20V183.38M424.37 170.37V186.64M428.81 180.13V194.23M433.26 192.06V208.33M437.70 198.57V221.34M442.15 214.84V227.85M446.59 220.26V221.34M446.59 224.60V237.61M451.04 208.33V264.73M455.49 234.36V236.53M455.49 240.87V251.71M459.93 230.02V243.04M464.38 223.51V227.85M464.38 239.78V258.87M468.82 220.26V239.78M473.26 215.92V216.36M473.26 233.28V239.78M477.71 214.84V247.38M482.15 234.36V235.01M482.15 237.18V246.29M486.60 224.60V226.77M486.60 235.01V238.70M491.04 220.26V223.51M491.04 227.20V230.02M495.49 213.75V215.49M495.49 225.03V225.68M499.94 213.75V237.61M504.38 227.85V252.80M508.82 243.04V253.88M513.27 239.78V251.71M517.72 244.12V256.05M522.16 241.95V245.21M522.16 247.38V252.80M526.61 221.34V222.86M526.61 246.72V249.54M531.05 217.98V219.07M531.05 228.83V229.91M535.50 214.73V215.81M535.50 220.15V220.80M539.94 200.63V203.88M539.94 215.81V216.90M544.38 202.80V213.64M548.83 203.88V206.05M548.83 209.74V210.39M553.27 193.69V195.64M553.27 206.05V215.38M557.72 193.04V208.87M562.16 203.23V203.88M562.16 208.22V208.87M566.61 197.81V199.11M566.61 204.32V204.97M571.06 188.70V194.12M571.06 199.54V200.20M575.50 190.22V191.52M575.50 194.12V197.38M579.94 180.02V186.53M579.94 190.87V191.95M584.39 182.19V183.28M584.39 186.10V190.87M588.84 162.67V163.75M588.84 183.28V185.88M593.28 137.29V138.16M593.28 163.75V164.19M597.73 121.02V121.45M597.73 138.16V138.81M602.17 111.69V117.11M602.17 121.02V124.27M606.62 100.85V106.27M606.62 117.77V122.10M611.06 106.92V121.45M615.50 116.46V126.88M619.95 125.79V135.55M624.39 133.38V141.41M628.84 130.13V130.56M628.84 140.98V141.41M633.28 130.13V135.12M637.73 128.61V135.12M642.17 129.70V132.95M646.62 126.88V127.31M646.62 132.30V132.95M651.07 122.10V122.54M651.07 127.53V130.78M655.51 121.02V121.89M655.51 126.44V130.13M659.95 124.27V135.99M664.40 120.37V121.45M664.40 124.71V125.79M668.85 111.69V117.11M668.85 121.45V122.10M673.29 111.69V116.03M673.29 118.20V123.62M677.74 114.95V123.62M682.18 120.37V120.80M682.18 122.54V125.79M686.62 108.44V117.11M686.62 120.80V121.45M691.07 114.95V122.10M695.51 118.20V124.27M699.96 118.20V119.28M699.96 121.02V124.27M704.40 108.44V109.09M704.40 119.93V122.54M708.85 101.93V123.62M713.30 115.60V131.21M717.74 122.10V122.97M717.74 126.88V128.61M722.18 119.28V134.03M726.63 124.71V140.98M731.08 130.13V136.64M735.52 135.55V144.23M739.97 138.81V144.23M744.41 142.06V151.39M748.86 144.23V146.83M748.86 151.17V151.82M753.30 145.31V151.82M757.75 135.12V135.99M757.75 149.65V150.74M762.19 129.52V165.97M766.63 147.31V165.31M771.08 153.38V170.74M775.53 162.06V176.16M779.97 168.57V179.41M784.41 170.74V172.91M784.41 175.08V182.67M788.86 169.00V185.92M793.31 173.99V183.32M797.75 162.06V166.40M797.75 182.23V182.89M802.19 152.30V155.12M802.19 166.83V167.48M806.64 147.96V158.81M811.09 146.88V170.30M815.53 165.31V181.58M819.98 176.16V190.69M824.42 188.09V197.85M828.87 184.84V193.08M828.87 195.03V197.85M833.31 192.00V196.77M837.75 194.60V205.44M842.20 196.77V210.87M846.64 193.51V197.85M846.64 209.78V214.12M851.09 187.01V194.60M851.09 197.85V202.19M855.54 191.34V201.54M859.98 200.02V209.35M864.42 185.92V194.16M864.42 208.70V209.35M868.87 185.92V187.01M868.87 193.51V198.94M873.32 184.19V194.16M877.76 189.83V191.34M877.76 193.51V197.85M882.21 189.83V196.77M886.65 191.82V199.40M891.10 184.89V185.75M891.10 198.32V198.97M895.54 172.32V174.06M895.54 185.75V187.05M899.99 163.22V164.09M899.99 174.92V175.57M904.43 160.41V167.99M908.88 164.09V172.32M913.32 166.91V175.57M917.77 169.72V176.66M922.21 173.41V182.07M926.65 177.74V183.15M931.10 174.92V186.40M935.55 169.72V170.16M935.55 181.42V182.07M939.99 166.91V167.99M939.99 169.51V170.16M944.43 166.91V172.32M948.88 169.72V173.41M953.33 169.07V169.72M953.33 172.32V174.49M957.77 156.07V159.32M957.77 169.72V170.16M962.21 157.59V172.76M966.66 164.74V182.07M971.11 172.32V173.41M971.11 180.55V182.07M975.55 164.09V164.74M975.55 173.41V174.06M980.00 157.59V162.57M980.00 164.09V164.74M984.44 143.73V147.41M984.44 162.57V163.22M988.88 139.83V144.16M988.88 147.41V150.66M993.33 134.41V140.91M993.33 143.73V145.89M997.78 138.74V144.59M1002.22 127.26V127.91M1002.22 144.59V145.24M1006.66 110.58V123.58M1006.66 127.91V131.59M1011.11 101.27V101.92M1011.11 124.23V126.40M1015.56 101.27V101.27M1015.56 102.27V101.70" stroke="#369636" stroke-width="1" fill="none"/><path d="M414.18 177.96h2.600v18.44h-2.600zM445.29 221.34h2.600v3.25h-2.600zM454.19 236.53h2.600v4.34h-2.600zM463.07 227.85h2.600v11.93h-2.600zM471.96 216.36h2.600v16.92h-2.600zM480.85 235.01h2.600v2.17h-2.600zM485.30 226.77h2.600v8.24h-2.600zM489.74 223.51h2.600v3.69h-2.600zM494.19 215.49h2.600v9.54h-2.600zM520.86 245.21h2.600v2.17h-2.600zM525.31 222.86h2.600v23.86h-2.600zM529.75 219.07h2.600v9.76h-2.600zM534.20 215.81h2.600v4.34h-2.600zM538.64 203.88h2.600v11.93h-2.600zM547.53 206.05h2.600v3.69h-2.600zM551.98 195.64h2.600v10.41h-2.600zM560.87 203.88h2.600v4.34h-2.600zM565.31 199.11h2.600v5.21h-2.600zM569.76 194.12h2.600v5.42h-2.600zM574.20 191.52h2.600v2.60h-2.600zM578.64 186.53h2.600v4.34h-2.600zM583.09 183.28h2.600v2.82h-2.600zM587.54 163.75h2.600v19.52h-2.600zM591.98 138.16h2.600v25.60h-2.600zM596.43 121.45h2.600v16.70h-2.600zM600.87 117.11h2.600v3.90h-2.600zM605.32 106.27h2.600v11.50h-2.600zM627.54 130.56h2.600v10.41h-2.600zM645.32 127.31h2.600v4.99h-2.600zM649.77 122.54h2.600v4.99h-2.600zM654.21 121.89h2.600v4.56h-2.600zM663.10 121.45h2.600v3.25h-2.600zM667.55 117.11h2.600v4.34h-2.600zM671.99 116.03h2.600v2.17h-2.600zM680.88 120.80h2.600v1.74h-2.600zM685.33 117.11h2.600v3.69h-2.600zM698.66 119.28h2.600v1.74h-2.600zM703.11 109.09h2.600v10.85h-2.600zM716.44 122.97h2.600v3.90h-2.600zM747.56 146.83h2.600v4.34h-2.600zM756.45 135.99h2.600v13.67h-2.600zM783.12 172.91h2.600v2.17h-2.600zM796.45 166.40h2.600v15.84h-2.600zM800.89 155.12h2.600v11.71h-2.600zM827.57 193.08h2.600v1.95h-2.600zM845.35 197.85h2.600v11.93h-2.600zM849.79 194.60h2.600v3.25h-2.600zM863.12 194.16h2.600v14.53h-2.600zM867.57 187.01h2.600v6.51h-2.600zM876.46 191.34h2.600v2.17h-2.600zM889.80 185.75h2.600v12.56h-2.600zM894.24 174.06h2.600v11.70h-2.600zM898.69 164.09h2.600v10.83h-2.600zM934.25 170.16h2.600v11.27h-2.600zM938.69 167.99h2.600v1.52h-2.600zM952.03 169.72h2.600v2.60h-2.600zM956.47 159.32h2.600v10.40h-2.600zM969.81 173.41h2.600v7.15h-2.600zM974.25 164.74h2.600v8.67h-2.600zM978.70 162.57h2.600v1.52h-2.600zM983.14 147.41h2.600v15.16h-2.600zM987.59 144.16h2.600v3.25h-2.600zM992.03 140.91h2.600v2.82h-2.600zM1000.92 127.91h2.600v16.68h-2.600zM1005.37 123.58h2.600v4.33h-2.600zM1009.81 101.92h2.600v22.31h-2.600zM1014.26 101.27h2.600v1.00h-2.600z" stroke="#369636" stroke-width=".9" fill="#000"/><path d="M396.20 145.42h3v32.54h-3zM400.64 176.88h3v5.42h-3zM405.09 182.30h3v13.02h-3zM409.53 194.23h3v1.74h-3zM418.43 177.96h3v1.08h-3zM422.87 178.61h3v6.94h-3zM427.31 185.12h3v8.03h-3zM431.76 193.15h3v8.68h-3zM436.20 200.74h3v16.27h-3zM440.65 216.36h3v8.68h-3zM449.54 222.43h3v17.35h-3zM458.43 237.18h3v2.17h-3zM467.32 228.94h3v3.90h-3zM476.21 217.01h3v20.61h-3zM498.44 217.01h3v19.52h-3zM502.88 233.71h3v11.50h-3zM507.32 244.12h3v1.74h-3zM511.77 243.47h3v3.47h-3zM516.22 245.86h3v1.95h-3zM542.88 203.88h3v7.59h-3zM556.22 195.64h3v12.58h-3zM609.56 107.35h3v10.41h-3zM614.00 117.11h3v9.33h-3zM618.45 126.44h3v7.59h-3zM622.89 134.03h3v6.94h-3zM631.78 130.56h3v2.17h-3zM636.23 130.78h3v1.52h-3zM640.67 131.21h3v1.00h-3zM658.45 124.71h3v1.30h-3zM676.24 116.03h3v6.51h-3zM689.57 116.46h3v4.99h-3zM694.01 121.02h3v1.00h-3zM707.35 109.09h3v8.68h-3zM711.80 117.77h3v8.68h-3zM720.68 122.54h3v10.85h-3zM725.13 132.95h3v1.00h-3zM729.58 132.95h3v3.04h-3zM734.02 135.99h3v3.47h-3zM738.47 139.46h3v3.69h-3zM742.91 143.15h3v7.59h-3zM751.80 146.40h3v3.25h-3zM760.69 135.60h3v25.38h-3zM765.13 160.54h3v1.95h-3zM769.58 161.63h3v5.21h-3zM774.03 166.83h3v4.99h-3zM778.47 172.47h3v2.17h-3zM787.36 173.34h3v4.34h-3zM791.81 177.68h3v3.90h-3zM805.14 154.47h3v1.08h-3zM809.59 155.55h3v14.10h-3zM814.03 169.65h3v10.85h-3zM818.48 178.98h3v10.85h-3zM822.92 189.18h3v5.42h-3zM831.81 192.86h3v1.74h-3zM836.25 195.03h3v7.16h-3zM840.70 203.28h3v6.51h-3zM854.04 194.16h3v6.51h-3zM858.48 200.67h3v8.03h-3zM871.82 186.36h3v6.51h-3zM880.71 192.00h3v2.60h-3zM885.15 194.64h3v2.60h-3zM902.93 164.74h3v1.08h-3zM907.38 164.74h3v6.50h-3zM911.82 170.16h3v1.08h-3zM916.27 170.59h3v3.90h-3zM920.71 174.06h3v4.77h-3zM925.15 178.39h3v3.03h-3zM929.60 180.99h3v1.08h-3zM942.93 168.42h3v1.30h-3zM947.38 170.16h3v2.60h-3zM960.71 159.32h3v6.50h-3zM965.16 165.39h3v15.16h-3zM996.28 139.83h3v4.33h-3z" fill="#d6f5d0" stroke="#8fd98a" stroke-width=".5"/></svg>
<div class="t" style="top:272.5px;font-size:9px;color:#e8e8e8;left:348px;transform:scaleX(0.852);transform-origin:left;">27 Dec 2021</div>
<div class="t" style="top:272.5px;font-size:9px;color:#e8e8e8;left:419.5px;transform:scaleX(0.865);transform-origin:left;">27 Dec 17:25</div>
<div class="t" style="top:272.5px;font-size:9px;color:#e8e8e8;left:490.8px;transform:scaleX(0.865);transform-origin:left;">27 Dec 18:45</div>
<div class="t" style="top:272.5px;font-size:9px;color:#e8e8e8;left:562px;transform:scaleX(0.865);transform-origin:left;">27 Dec 20:05</div>
<div class="t" style="top:272.5px;font-size:9px;color:#e8e8e8;left:633px;transform:scaleX(0.865);transform-origin:left;">27 Dec 21:25</div>
<div class="t" style="top:272.5px;font-size:9px;color:#e8e8e8;left:704.3px;transform:scaleX(0.865);transform-origin:left;">27 Dec 23:55</div>
<div class="t" style="top:272.5px;font-size:9px;color:#e8e8e8;left:775.5px;transform:scaleX(0.865);transform-origin:left;">28 Dec 01:15</div>
<div class="t" style="top:272.5px;font-size:9px;color:#e8e8e8;left:846.7px;transform:scaleX(0.865);transform-origin:left;">28 Dec 02:35</div>
<div class="t" style="top:272.5px;font-size:9px;color:#e8e8e8;left:918px;transform:scaleX(0.865);transform-origin:left;">28 Dec 03:55</div>
<div class="t" style="top:272.5px;font-size:9px;color:#e8e8e8;left:989px;transform:scaleX(0.865);transform-origin:left;">28 Dec 05:15</div>
<div class="t" style="top:137px;font-size:9px;color:#f6f6f6;left:1030px;transform:scaleX(0.888);transform-origin:left;">1811.05</div>
<div class="t" style="top:173.5px;font-size:9px;color:#f6f6f6;left:1030px;transform:scaleX(0.870);transform-origin:left;">1809.70</div>
<div class="t" style="top:209.8px;font-size:9px;color:#f6f6f6;left:1030px;transform:scaleX(0.870);transform-origin:left;">1808.35</div>
<div class="t" style="top:246.1px;font-size:9px;color:#f6f6f6;left:1030px;transform:scaleX(0.870);transform-origin:left;">1807.00</div>
<div class="t" style="top:101.5px;font-size:9px;color:#e8e8e8;left:1030px;transform:scaleX(0.870);transform-origin:left;">1812.40</div>
<div class="a" style="left:1027px;top:97.3px;width:33px;height:8px;background:#ffffff;"></div>
<div class="t" style="top:97px;font-size:9px;color:#000;left:1030px;transform:scaleX(0.870);transform-origin:left;">1812.54</div>
<svg class="a" style="left:1057px;top:102px;width:9px;height:50px;" viewBox="0 0 9 50"><rect x="0.500" y="0.500" width="8" height="48.500" rx="2" fill="none" stroke="#777" stroke-width="1"/><path d="M1.500 30h6M1.500 32.500h6M1.500 35h6M1.500 37.500h6M1.500 40h6M1.500 42.500h6M1.500 45h6M1.500 47h6" stroke="#3a9a3a" stroke-width=".9"/></svg>
<svg class="a" style="left:350.5px;top:86.5px;width:6px;height:4px;" viewBox="0 0 6 4"><path d="M0 4l3-4 3 4z" fill="#fff"/></svg>
<div class="a" style="left:353px;top:91px;width:1px;height:3px;background:#3a3a3a;"></div>
<div class="t" style="top:84.5px;font-size:9px;color:#f0f0f0;left:360px;transform:scaleX(0.781);transform-origin:left;">XAUUSD,M5</div>
<div class="t" style="top:84.5px;font-size:9px;color:#f0f0f0;left:406.3px;transform:scaleX(0.883);transform-origin:left;">1812.50 1812.54 1812.49 1812.54</div>
<div class="a" style="left:349.5px;top:97.3px;width:47.5px;height:16.5px;background:linear-gradient(#4d4df7,#2b2bdd);"></div>
<div class="a" style="left:495px;top:97.3px;width:48.5px;height:16.5px;background:linear-gradient(#4d4df7,#2b2bdd);"></div>
<div class="a" style="left:349.5px;top:113.7px;width:96.5px;height:30.3px;background:linear-gradient(#2c2ce0,#1010ae);"></div>
<div class="a" style="left:447.3px;top:113.7px;width:96.2px;height:30.3px;background:linear-gradient(#2c2ce0,#1010ae);"></div>
<div class="a" style="left:446px;top:113.7px;width:1.3px;height:30.3px;background:#0c0c90;"></div>
<div class="a" style="left:397.5px;top:97.3px;width:97.5px;height:16px;background:#ffffff;border:1px solid #888"></div>
<div class="a" style="left:398px;top:97.8px;width:15px;height:15px;background:#e6e6e6;"></div>
<div class="a" style="left:479.5px;top:97.8px;width:15px;height:15px;background:#e6e6e6;"></div>
<svg class="a" style="left:402.5px;top:103.5px;width:5px;height:3px;" viewBox="0 0 5 3"><path d="M0 0h5l-2.500 3z" fill="#111"/></svg>
<svg class="a" style="left:484.5px;top:103.5px;width:5px;height:3px;" viewBox="0 0 5 3"><path d="M0 3h5l-2.500-3z" fill="#111"/></svg>
<div class="t" style="top:100px;font-size:11px;color:#222;right:589px;transform:scaleX(0.934);transform-origin:right;">0.10</div>
<div class="t" style="top:100px;font-size:11px;color:#dcdcff;left:362.4px;transform:scaleX(0.761);transform-origin:left;">SELL</div>
<div class="t" style="top:100px;font-size:11px;color:#dcdcff;left:510.3px;transform:scaleX(0.840);transform-origin:left;">BUY</div>
<div class="t" style="top:131px;font-size:10px;color:#f2f2ff;font-weight:bold;left:371.4px;transform:scaleX(1.056);transform-origin:left;">1812</div>
<div class="t" style="top:114.5px;font-size:28.5px;color:#ffffff;left:400px;transform:scaleX(0.867);transform-origin:left;">54</div>
<div class="t" style="top:131px;font-size:10px;color:#f2f2ff;font-weight:bold;left:468.5px;transform:scaleX(1.056);transform-origin:left;">1812</div>
<div class="t" style="top:114.5px;font-size:28.5px;color:#ffffff;left:495.5px;transform:scaleX(0.867);transform-origin:left;">91</div>
<div class="a" style="left:346px;top:286px;width:721px;height:17px;background:#f0f0f0;"></div>
<div class="a" style="left:346px;top:285px;width:721px;height:1px;background:#6a6a6a;"></div>
<div class="a" style="left:346px;top:286px;width:1px;height:16px;background:#8a8a8a;"></div>
<div class="t" style="top:290px;font-size:10.5px;color:#7a7a7a;left:358px;transform:scaleX(0.906);transform-origin:left;">EURUSD,H1</div>
<div class="a" style="left:423.4px;top:289px;width:1px;height:11px;background:#8a8a8a;"></div>
<div class="t" style="top:290px;font-size:10.5px;color:#7a7a7a;left:431px;transform:scaleX(0.906);transform-origin:left;">GBPUSD,H1</div>
<div class="a" style="left:496px;top:285.5px;width:78px;height:17px;background:#ffffff;border:1px solid #3c3c3c;border-top:none"></div>
<div class="t" style="top:290px;font-size:10.5px;color:#111;left:506px;transform:scaleX(0.930);transform-origin:left;">XAUUSD,M5</div>
<div class="t" style="top:290px;font-size:10.5px;color:#7a7a7a;left:584px;transform:scaleX(0.940);transform-origin:left;">DJCUSD,M15</div>
<div class="a" style="left:656px;top:289px;width:1px;height:11px;background:#8a8a8a;"></div>
<div class="t" style="top:290px;font-size:10.5px;color:#7a7a7a;left:665px;transform:scaleX(0.939);transform-origin:left;">ETHUSD,M5</div>
<div class="a" style="left:732.6px;top:289px;width:1px;height:11px;background:#8a8a8a;"></div>
<div class="t" style="top:290px;font-size:10.5px;color:#7a7a7a;left:741px;transform:scaleX(0.927);transform-origin:left;">XBRUSD,M5</div>
<div class="a" style="left:807px;top:289px;width:1px;height:11px;background:#8a8a8a;"></div>
<div class="t" style="top:290px;font-size:10.5px;color:#7a7a7a;left:816px;transform:scaleX(0.963);transform-origin:left;">XTIUSD,M15</div>
<div class="a" style="left:885px;top:289px;width:1px;height:11px;background:#8a8a8a;"></div>
<div class="t" style="top:290px;font-size:10.5px;color:#7a7a7a;left:894.4px;transform:scaleX(0.933);transform-origin:left;">BTCUSD,M5</div>
<div class="a" style="left:960.7px;top:289px;width:1px;height:11px;background:#8a8a8a;"></div>
<svg class="a" style="left:1040px;top:292px;width:4px;height:5px;" viewBox="0 0 4 5"><path d="M4 0v5l-4-2.500z" fill="#ababab"/></svg>
<svg class="a" style="left:1056px;top:292px;width:4px;height:5px;" viewBox="0 0 4 5"><path d="M0 0v5l4-2.500z" fill="#9a9a9a"/></svg>
<div class="a" style="left:0px;top:303px;width:1067px;height:1px;background:#fafafa;"></div>
<div class="a" style="left:0px;top:305px;width:13.5px;height:240px;background:linear-gradient(90deg,#e6edf6,#c9d6e6 30%,#c5d3e3);"></div>
<div class="a" style="left:0px;top:305px;width:13.5px;height:14px;background:#f0f0f0;"></div>
<svg class="a" style="left:3.5px;top:308.5px;width:6px;height:6px;" viewBox="0 0 6 6"><path d="M0.500 0.500l5 5m0-5l-5 5" stroke="#111" stroke-width="1.300"/></svg>
<div class="t" style="left:-4px;top:528px;font-size:9.500px;color:#222;width:20px;height:10px;text-align:center;transform:rotate(-90deg);transform-origin:center">终端</div>
<div class="a" style="left:12.5px;top:307px;width:1054.5px;height:221px;background:#ffffff;border-left:1px solid #a8a8a8;border-top:1px solid #a8a8a8"></div>
<div class="a" style="left:13.5px;top:324.25px;width:1035px;height:16.67px;background:#ebebeb;"></div>
<div class="a" style="left:13.5px;top:357.59px;width:1035px;height:16.67px;background:#ebebeb;"></div>
<div class="a" style="left:13.5px;top:390.93px;width:1035px;height:16.67px;background:#ebebeb;"></div>
<div class="a" style="left:13.5px;top:424.27px;width:1035px;height:16.67px;background:#ebebeb;"></div>
<div class="a" style="left:13.5px;top:457.61px;width:1035px;height:16.67px;background:#ebebeb;"></div>
<div class="a" style="left:13.5px;top:490.95px;width:1035px;height:16.67px;background:#ebebeb;"></div>
<div class="a" style="left:441px;top:490.95px;width:57px;height:16.67px;background:#f6a1aa;"></div>
<div class="a" style="left:441px;top:507.62px;width:57px;height:16.97px;background:#f6a1aa;"></div>
<div class="a" style="left:89px;top:308px;width:1px;height:216.29px;background:rgba(150,150,150,.22);"></div>
<div class="a" style="left:216.5px;top:308px;width:1px;height:216.29px;background:rgba(150,150,150,.22);"></div>
<div class="a" style="left:276px;top:308px;width:1px;height:216.29px;background:rgba(150,150,150,.22);"></div>
<div class="a" style="left:322.5px;top:308px;width:1px;height:216.29px;background:rgba(150,150,150,.22);"></div>
<div class="a" style="left:381px;top:308px;width:1px;height:216.29px;background:rgba(150,150,150,.22);"></div>
<div class="a" style="left:440px;top:308px;width:1px;height:216.29px;background:rgba(150,150,150,.22);"></div>
<div class="a" style="left:498px;top:308px;width:1px;height:216.29px;background:rgba(150,150,150,.22);"></div>
<div class="a" style="left:556.5px;top:308px;width:1px;height:216.29px;background:rgba(150,150,150,.22);"></div>
<div class="a" style="left:685.5px;top:308px;width:1px;height:216.29px;background:rgba(150,150,150,.22);"></div>
<div class="a" style="left:744px;top:308px;width:1px;height:216.29px;background:rgba(150,150,150,.22);"></div>
<div class="a" style="left:802.5px;top:308px;width:1px;height:216.29px;background:rgba(150,150,150,.22);"></div>
<div class="a" style="left:866.5px;top:308px;width:1px;height:216.29px;background:rgba(150,150,150,.22);"></div>
<div class="a" style="left:13.5px;top:526.5px;width:1035px;height:1px;background:#555;"></div>
<div class="t" style="top:310.5px;font-size:10.5px;color:#111;left:17px;transform:scaleX(0.952);transform-origin:left;">订单</div>
<div class="t" style="top:310.5px;font-size:10.5px;color:#111;right:852px;transform:scaleX(0.929);transform-origin:right;">时间</div>
<div class="t" style="top:310.5px;font-size:10.5px;color:#111;right:793px;transform:scaleX(0.929);transform-origin:right;">类型</div>
<div class="t" style="top:310.5px;font-size:10.5px;color:#111;right:747px;transform:scaleX(0.929);transform-origin:right;">手数</div>
<div class="t" style="top:310.5px;font-size:10.5px;color:#111;right:688px;transform:scaleX(0.929);transform-origin:right;">交易品种</div>
<div class="t" style="top:310.5px;font-size:10.5px;color:#111;right:629.5px;transform:scaleX(0.929);transform-origin:right;">价格</div>
<div class="t" style="top:310.5px;font-size:10.5px;color:#111;right:571px;transform:scaleX(0.929);transform-origin:right;">止损</div>
<div class="t" style="top:310.5px;font-size:10.5px;color:#111;right:513px;transform:scaleX(0.929);transform-origin:right;">止盈</div>
<div class="t" style="top:310.5px;font-size:10.5px;color:#111;right:395.5px;transform:scaleX(0.929);transform-origin:right;">时间</div>
<div class="t" style="top:310.5px;font-size:10.5px;color:#111;right:325.5px;transform:scaleX(0.929);transform-origin:right;">价格</div>
<div class="t" style="top:310.5px;font-size:10.5px;color:#111;right:266.5px;transform:scaleX(0.937);transform-origin:right;">库存费</div>
<div class="t" style="top:310.5px;font-size:10.5px;color:#111;right:203px;transform:scaleX(0.929);transform-origin:right;">获利</div>
<div class="t" style="top:310.5px;font-size:10.5px;color:#111;right:21px;transform:scaleX(0.952);transform-origin:right;">注释</div>
<svg class="a" style="left:677px;top:314px;width:4px;height:4px;" viewBox="0 0 4 4"><path d="M0 4L4 0" stroke="#999" stroke-width=".8"/></svg>
<svg class="a" style="left:17px;top:326.75px;width:12px;height:12px;" viewBox="0 0 12 12"><path d="M0.500 0.500h6l2.500 2.500v8h-8.500z" fill="#fdfdfd" stroke="#7a7a7a" stroke-width=".9"/><path d="M6.500 0.500v2.500h2.500" fill="none" stroke="#7a7a7a" stroke-width=".7"/><circle cx="8.300" cy="8.700" r="2.900" fill="#e8452c" stroke="#a02a18" stroke-width=".5"/><circle cx="7.500" cy="7.900" r=".9" fill="#fff" opacity=".6"/></svg>
<div class="t" style="top:327.55px;font-size:11px;color:#1c1c1c;left:31.25px;transform:scaleX(0.992);transform-origin:left;">9197729</div>
<div class="t" style="top:327.55px;font-size:11px;color:#1c1c1c;right:852px;transform:scaleX(0.983);transform-origin:right;">2021.12.16 16:04:52</div>
<div class="t" style="top:327.55px;font-size:11px;color:#1c1c1c;right:793px;transform:scaleX(1.005);transform-origin:right;">sell</div>
<div class="t" style="top:327.55px;font-size:11px;color:#1c1c1c;right:747px;transform:scaleX(0.983);transform-origin:right;">0.10</div>
<div class="t" style="top:327.55px;font-size:11px;color:#1c1c1c;right:688px;transform:scaleX(1.094);transform-origin:right;">djcusd</div>
<div class="t" style="top:327.55px;font-size:11px;color:#1c1c1c;right:629.5px;transform:scaleX(0.986);transform-origin:right;">36109.90</div>
<div class="t" style="top:327.55px;font-size:11px;color:#1c1c1c;right:571px;transform:scaleX(0.983);transform-origin:right;">0.00</div>
<div class="t" style="top:327.55px;font-size:11px;color:#1c1c1c;right:513px;transform:scaleX(0.986);transform-origin:right;">36045.00</div>
<div class="t" style="top:327.55px;font-size:11px;color:#1c1c1c;right:384.5px;transform:scaleX(0.983);transform-origin:right;">2021.12.16 16:37:06</div>
<div class="t" style="top:327.55px;font-size:11px;color:#1c1c1c;right:325.5px;transform:scaleX(0.986);transform-origin:right;">36077.00</div>
<div class="t" style="top:327.55px;font-size:11px;color:#1c1c1c;right:267px;transform:scaleX(0.983);transform-origin:right;">0.00</div>
<div class="t" style="top:327.55px;font-size:11px;color:#1c1c1c;right:203px;transform:scaleX(0.984);transform-origin:right;">32.90</div>
<svg class="a" style="left:17px;top:343.92px;width:10px;height:11px;" viewBox="0 0 10 11"><rect x="0.500" y="0.500" width="9" height="10" fill="#f4fbf2" stroke="#4a9a3f" stroke-width=".9"/><path d="M5 2.200L8 5.500H6.300V8.500H3.700V5.500H2z" fill="#2fae2f" stroke="#1c7a1c" stroke-width=".5"/></svg>
<div class="t" style="top:344.22px;font-size:11px;color:#1c1c1c;left:31.25px;transform:scaleX(0.992);transform-origin:left;">9205737</div>
<div class="t" style="top:344.22px;font-size:11px;color:#1c1c1c;right:852px;transform:scaleX(0.983);transform-origin:right;">2021.12.17 12:20:08</div>
<div class="t" style="top:344.22px;font-size:11px;color:#1c1c1c;right:793px;transform:scaleX(0.968);transform-origin:right;">balance</div>
<div class="t" style="top:344.22px;font-size:11px;color:#1c1c1c;right:203px;transform:scaleX(0.984);transform-origin:right;">72.00</div>
<div class="t" style="top:344.22px;font-size:11px;color:#1c1c1c;right:22px;transform:scaleX(0.985);transform-origin:right;">Deposit ib#19633 from#507921</div>
<svg class="a" style="left:17px;top:360.59px;width:10px;height:11px;" viewBox="0 0 10 11"><rect x="0.500" y="0.500" width="9" height="10" fill="#f4fbf2" stroke="#4a9a3f" stroke-width=".9"/><path d="M5 2.200L8 5.500H6.300V8.500H3.700V5.500H2z" fill="#2fae2f" stroke="#1c7a1c" stroke-width=".5"/></svg>
<div class="t" style="top:360.89px;font-size:11px;color:#1c1c1c;left:31.25px;transform:scaleX(0.992);transform-origin:left;">9206238</div>
<div class="t" style="top:360.89px;font-size:11px;color:#1c1c1c;right:852px;transform:scaleX(0.983);transform-origin:right;">2021.12.17 13:07:43</div>
<div class="t" style="top:360.89px;font-size:11px;color:#1c1c1c;right:793px;transform:scaleX(0.968);transform-origin:right;">balance</div>
<div class="t" style="top:360.89px;font-size:11px;color:#1c1c1c;right:203px;transform:scaleX(0.983);transform-origin:right;">3 000.00</div>
<div class="t" style="top:360.89px;font-size:11px;color:#1c1c1c;right:22px;transform:scaleX(0.982);transform-origin:right;">Deposit maxib#26930</div>
<svg class="a" style="left:17px;top:376.76px;width:12px;height:12px;" viewBox="0 0 12 12"><path d="M0.500 0.500h6l2.500 2.500v8h-8.500z" fill="#fdfdfd" stroke="#7a7a7a" stroke-width=".9"/><path d="M6.500 0.500v2.500h2.500" fill="none" stroke="#7a7a7a" stroke-width=".7"/><circle cx="8.300" cy="8.700" r="2.900" fill="#e8452c" stroke="#a02a18" stroke-width=".5"/><circle cx="7.500" cy="7.900" r=".9" fill="#fff" opacity=".6"/></svg>
<div class="t" style="top:377.56px;font-size:11px;color:#1c1c1c;left:31.25px;transform:scaleX(0.992);transform-origin:left;">9203254</div>
<div class="t" style="top:377.56px;font-size:11px;color:#1c1c1c;right:852px;transform:scaleX(0.983);transform-origin:right;">2021.12.17 07:10:06</div>
<div class="t" style="top:377.56px;font-size:11px;color:#1c1c1c;right:793px;transform:scaleX(1.005);transform-origin:right;">sell</div>
<div class="t" style="top:377.56px;font-size:11px;color:#1c1c1c;right:747px;transform:scaleX(0.983);transform-origin:right;">0.10</div>
<div class="t" style="top:377.56px;font-size:11px;color:#1c1c1c;right:688px;transform:scaleX(0.981);transform-origin:right;">xauusd</div>
<div class="t" style="top:377.56px;font-size:11px;color:#1c1c1c;right:629.5px;transform:scaleX(0.986);transform-origin:right;">1807.90</div>
<div class="t" style="top:377.56px;font-size:11px;color:#1c1c1c;right:571px;transform:scaleX(0.986);transform-origin:right;">1814.00</div>
<div class="t" style="top:377.56px;font-size:11px;color:#1c1c1c;right:513px;transform:scaleX(0.986);transform-origin:right;">1797.00</div>
<div class="t" style="top:377.56px;font-size:11px;color:#1c1c1c;right:384.5px;transform:scaleX(0.983);transform-origin:right;">2021.12.17 14:03:08</div>
<div class="t" style="top:377.56px;font-size:11px;color:#1c1c1c;right:325.5px;transform:scaleX(0.986);transform-origin:right;">1807.58</div>
<div class="t" style="top:377.56px;font-size:11px;color:#1c1c1c;right:267px;transform:scaleX(0.983);transform-origin:right;">0.00</div>
<div class="t" style="top:377.56px;font-size:11px;color:#1c1c1c;right:203px;transform:scaleX(0.983);transform-origin:right;">3.20</div>
<svg class="a" style="left:17px;top:393.43px;width:12px;height:12px;" viewBox="0 0 12 12"><path d="M0.500 0.500h6l2.500 2.500v8h-8.500z" fill="#fdfdfd" stroke="#7a7a7a" stroke-width=".9"/><path d="M6.500 0.500v2.500h2.500" fill="none" stroke="#7a7a7a" stroke-width=".7"/><circle cx="8.300" cy="8.700" r="2.900" fill="#e8452c" stroke="#a02a18" stroke-width=".5"/><circle cx="7.500" cy="7.900" r=".9" fill="#fff" opacity=".6"/></svg>
<div class="t" style="top:394.23px;font-size:11px;color:#1c1c1c;left:31.25px;transform:scaleX(0.992);transform-origin:left;">9193821</div>
<div class="t" style="top:394.23px;font-size:11px;color:#1c1c1c;right:852px;transform:scaleX(0.983);transform-origin:right;">2021.12.16 13:05:48</div>
<div class="t" style="top:394.23px;font-size:11px;color:#1c1c1c;right:793px;transform:scaleX(1.005);transform-origin:right;">sell</div>
<div class="t" style="top:394.23px;font-size:11px;color:#1c1c1c;right:747px;transform:scaleX(0.983);transform-origin:right;">0.02</div>
<div class="t" style="top:394.23px;font-size:11px;color:#1c1c1c;right:688px;transform:scaleX(0.981);transform-origin:right;">xauusd</div>
<div class="t" style="top:394.23px;font-size:11px;color:#1c1c1c;right:629.5px;transform:scaleX(0.986);transform-origin:right;">1785.09</div>
<div class="t" style="top:394.23px;font-size:11px;color:#1c1c1c;right:571px;transform:scaleX(0.986);transform-origin:right;">1808.81</div>
<div class="t" style="top:394.23px;font-size:11px;color:#1c1c1c;right:513px;transform:scaleX(0.983);transform-origin:right;">0.00</div>
<div class="t" style="top:394.23px;font-size:11px;color:#1c1c1c;right:384.5px;transform:scaleX(0.983);transform-origin:right;">2021.12.17 14:17:00</div>
<div class="t" style="top:394.23px;font-size:11px;color:#1c1c1c;right:325.5px;transform:scaleX(0.986);transform-origin:right;">1806.13</div>
<div class="t" style="top:394.23px;font-size:11px;color:#1c1c1c;right:267px;transform:scaleX(0.983);transform-origin:right;">-0.12</div>
<div class="t" style="top:394.23px;font-size:11px;color:#1c1c1c;right:203px;transform:scaleX(0.984);transform-origin:right;">-42.08</div>
<svg class="a" style="left:17px;top:410.1px;width:12px;height:12px;" viewBox="0 0 12 12"><path d="M0.500 0.500h6l2.500 2.500v8h-8.500z" fill="#fdfdfd" stroke="#7a7a7a" stroke-width=".9"/><path d="M6.500 0.500v2.500h2.500" fill="none" stroke="#7a7a7a" stroke-width=".7"/><circle cx="8.300" cy="8.700" r="2.900" fill="#e8452c" stroke="#a02a18" stroke-width=".5"/><circle cx="7.500" cy="7.900" r=".9" fill="#fff" opacity=".6"/></svg>
<div class="t" style="top:410.9px;font-size:11px;color:#1c1c1c;left:31.25px;transform:scaleX(0.992);transform-origin:left;">9193820</div>
<div class="t" style="top:410.9px;font-size:11px;color:#1c1c1c;right:852px;transform:scaleX(0.983);transform-origin:right;">2021.12.16 13:05:46</div>
<div class="t" style="top:410.9px;font-size:11px;color:#1c1c1c;right:793px;transform:scaleX(1.005);transform-origin:right;">sell</div>
<div class="t" style="top:410.9px;font-size:11px;color:#1c1c1c;right:747px;transform:scaleX(0.983);transform-origin:right;">0.10</div>
<div class="t" style="top:410.9px;font-size:11px;color:#1c1c1c;right:688px;transform:scaleX(0.981);transform-origin:right;">xauusd</div>
<div class="t" style="top:410.9px;font-size:11px;color:#1c1c1c;right:629.5px;transform:scaleX(0.986);transform-origin:right;">1785.10</div>
<div class="t" style="top:410.9px;font-size:11px;color:#1c1c1c;right:571px;transform:scaleX(0.986);transform-origin:right;">1808.80</div>
<div class="t" style="top:410.9px;font-size:11px;color:#1c1c1c;right:513px;transform:scaleX(0.986);transform-origin:right;">1797.00</div>
<div class="t" style="top:410.9px;font-size:11px;color:#1c1c1c;right:384.5px;transform:scaleX(0.983);transform-origin:right;">2021.12.17 14:18:39</div>
<div class="t" style="top:410.9px;font-size:11px;color:#1c1c1c;right:325.5px;transform:scaleX(0.986);transform-origin:right;">1806.13</div>
<div class="t" style="top:410.9px;font-size:11px;color:#1c1c1c;right:267px;transform:scaleX(0.983);transform-origin:right;">-0.60</div>
<div class="t" style="top:410.9px;font-size:11px;color:#1c1c1c;right:203px;transform:scaleX(0.985);transform-origin:right;">-210.30</div>
<svg class="a" style="left:17px;top:426.77px;width:12px;height:12px;" viewBox="0 0 12 12"><path d="M0.500 0.500h6l2.500 2.500v8h-8.500z" fill="#fdfdfd" stroke="#7a7a7a" stroke-width=".9"/><path d="M6.500 0.500v2.500h2.500" fill="none" stroke="#7a7a7a" stroke-width=".7"/><circle cx="8.300" cy="8.700" r="2.900" fill="#e8452c" stroke="#a02a18" stroke-width=".5"/><circle cx="7.500" cy="7.900" r=".9" fill="#fff" opacity=".6"/></svg>
<div class="t" style="top:427.57px;font-size:11px;color:#1c1c1c;left:31.25px;transform:scaleX(0.992);transform-origin:left;">9196803</div>
<div class="t" style="top:427.57px;font-size:11px;color:#1c1c1c;right:852px;transform:scaleX(0.983);transform-origin:right;">2021.12.16 15:18:40</div>
<div class="t" style="top:427.57px;font-size:11px;color:#1c1c1c;right:793px;transform:scaleX(1.005);transform-origin:right;">sell</div>
<div class="t" style="top:427.57px;font-size:11px;color:#1c1c1c;right:747px;transform:scaleX(0.983);transform-origin:right;">0.10</div>
<div class="t" style="top:427.57px;font-size:11px;color:#1c1c1c;right:688px;transform:scaleX(0.981);transform-origin:right;">xauusd</div>
<div class="t" style="top:427.57px;font-size:11px;color:#1c1c1c;right:629.5px;transform:scaleX(0.986);transform-origin:right;">1796.59</div>
<div class="t" style="top:427.57px;font-size:11px;color:#1c1c1c;right:571px;transform:scaleX(0.986);transform-origin:right;">1808.80</div>
<div class="t" style="top:427.57px;font-size:11px;color:#1c1c1c;right:513px;transform:scaleX(0.986);transform-origin:right;">1797.00</div>
<div class="t" style="top:427.57px;font-size:11px;color:#1c1c1c;right:384.5px;transform:scaleX(0.983);transform-origin:right;">2021.12.17 14:22:31</div>
<div class="t" style="top:427.57px;font-size:11px;color:#1c1c1c;right:325.5px;transform:scaleX(0.986);transform-origin:right;">1807.09</div>
<div class="t" style="top:427.57px;font-size:11px;color:#1c1c1c;right:267px;transform:scaleX(0.983);transform-origin:right;">-0.60</div>
<div class="t" style="top:427.57px;font-size:11px;color:#1c1c1c;right:203px;transform:scaleX(0.985);transform-origin:right;">-105.00</div>
<svg class="a" style="left:17px;top:443.44px;width:12px;height:12px;" viewBox="0 0 12 12"><path d="M0.500 0.500h6l2.500 2.500v8h-8.500z" fill="#fdfdfd" stroke="#7a7a7a" stroke-width=".9"/><path d="M6.500 0.500v2.500h2.500" fill="none" stroke="#7a7a7a" stroke-width=".7"/><circle cx="8.300" cy="8.700" r="2.900" fill="#e8452c" stroke="#a02a18" stroke-width=".5"/><circle cx="7.500" cy="7.900" r=".9" fill="#fff" opacity=".6"/></svg>
<div class="t" style="top:444.24px;font-size:11px;color:#1c1c1c;left:31.25px;transform:scaleX(0.992);transform-origin:left;">9201018</div>
<div class="t" style="top:444.24px;font-size:11px;color:#1c1c1c;right:852px;transform:scaleX(0.983);transform-origin:right;">2021.12.17 02:04:01</div>
<div class="t" style="top:444.24px;font-size:11px;color:#1c1c1c;right:793px;transform:scaleX(1.005);transform-origin:right;">sell</div>
<div class="t" style="top:444.24px;font-size:11px;color:#1c1c1c;right:747px;transform:scaleX(0.983);transform-origin:right;">0.10</div>
<div class="t" style="top:444.24px;font-size:11px;color:#1c1c1c;right:688px;transform:scaleX(0.981);transform-origin:right;">xauusd</div>
<div class="t" style="top:444.24px;font-size:11px;color:#1c1c1c;right:629.5px;transform:scaleX(0.986);transform-origin:right;">1802.82</div>
<div class="t" style="top:444.24px;font-size:11px;color:#1c1c1c;right:571px;transform:scaleX(0.986);transform-origin:right;">1808.87</div>
<div class="t" style="top:444.24px;font-size:11px;color:#1c1c1c;right:513px;transform:scaleX(0.986);transform-origin:right;">1797.00</div>
<div class="t" style="top:444.24px;font-size:11px;color:#1c1c1c;right:384.5px;transform:scaleX(0.983);transform-origin:right;">2021.12.17 14:22:32</div>
<div class="t" style="top:444.24px;font-size:11px;color:#1c1c1c;right:325.5px;transform:scaleX(0.986);transform-origin:right;">1807.10</div>
<div class="t" style="top:444.24px;font-size:11px;color:#1c1c1c;right:267px;transform:scaleX(0.983);transform-origin:right;">0.00</div>
<div class="t" style="top:444.24px;font-size:11px;color:#1c1c1c;right:203px;transform:scaleX(0.984);transform-origin:right;">-42.80</div>
<svg class="a" style="left:17px;top:460.11px;width:12px;height:12px;" viewBox="0 0 12 12"><path d="M0.500 0.500h6l2.500 2.500v8h-8.500z" fill="#fdfdfd" stroke="#7a7a7a" stroke-width=".9"/><path d="M6.500 0.500v2.500h2.500" fill="none" stroke="#7a7a7a" stroke-width=".7"/><circle cx="8.300" cy="8.700" r="2.900" fill="#e8452c" stroke="#a02a18" stroke-width=".5"/><circle cx="7.500" cy="7.900" r=".9" fill="#fff" opacity=".6"/></svg>
<div class="t" style="top:460.91px;font-size:11px;color:#1c1c1c;left:31.25px;transform:scaleX(0.992);transform-origin:left;">9196055</div>
<div class="t" style="top:460.91px;font-size:11px;color:#1c1c1c;right:852px;transform:scaleX(0.983);transform-origin:right;">2021.12.16 14:51:34</div>
<div class="t" style="top:460.91px;font-size:11px;color:#1c1c1c;right:793px;transform:scaleX(1.005);transform-origin:right;">sell</div>
<div class="t" style="top:460.91px;font-size:11px;color:#1c1c1c;right:747px;transform:scaleX(0.983);transform-origin:right;">0.10</div>
<div class="t" style="top:460.91px;font-size:11px;color:#1c1c1c;right:688px;transform:scaleX(0.981);transform-origin:right;">xauusd</div>
<div class="t" style="top:460.91px;font-size:11px;color:#1c1c1c;right:629.5px;transform:scaleX(0.986);transform-origin:right;">1791.92</div>
<div class="t" style="top:460.91px;font-size:11px;color:#1c1c1c;right:571px;transform:scaleX(0.986);transform-origin:right;">1808.83</div>
<div class="t" style="top:460.91px;font-size:11px;color:#1c1c1c;right:513px;transform:scaleX(0.986);transform-origin:right;">1797.00</div>
<div class="t" style="top:460.91px;font-size:11px;color:#1c1c1c;right:384.5px;transform:scaleX(0.983);transform-origin:right;">2021.12.17 14:22:32</div>
<div class="t" style="top:460.91px;font-size:11px;color:#1c1c1c;right:325.5px;transform:scaleX(0.986);transform-origin:right;">1807.10</div>
<div class="t" style="top:460.91px;font-size:11px;color:#1c1c1c;right:267px;transform:scaleX(0.983);transform-origin:right;">-0.60</div>
<div class="t" style="top:460.91px;font-size:11px;color:#1c1c1c;right:203px;transform:scaleX(0.985);transform-origin:right;">-151.80</div>
<svg class="a" style="left:17px;top:476.78px;width:12px;height:12px;" viewBox="0 0 12 12"><path d="M0.500 0.500h6l2.500 2.500v8h-8.500z" fill="#fdfdfd" stroke="#7a7a7a" stroke-width=".9"/><path d="M6.500 0.500v2.500h2.500" fill="none" stroke="#7a7a7a" stroke-width=".7"/><circle cx="8.300" cy="8.700" r="2.900" fill="#3a8ee0" stroke="#1f5fa8" stroke-width=".5"/><circle cx="7.500" cy="7.900" r=".9" fill="#fff" opacity=".6"/></svg>
<div class="t" style="top:477.58px;font-size:11px;color:#1c1c1c;left:31.25px;transform:scaleX(0.992);transform-origin:left;">9207235</div>
<div class="t" style="top:477.58px;font-size:11px;color:#1c1c1c;right:852px;transform:scaleX(0.983);transform-origin:right;">2021.12.17 14:23:27</div>
<div class="t" style="top:477.58px;font-size:11px;color:#1c1c1c;right:793px;transform:scaleX(0.980);transform-origin:right;">buy</div>
<div class="t" style="top:477.58px;font-size:11px;color:#1c1c1c;right:747px;transform:scaleX(0.983);transform-origin:right;">0.10</div>
<div class="t" style="top:477.58px;font-size:11px;color:#1c1c1c;right:688px;transform:scaleX(0.987);transform-origin:right;">ethusd</div>
<div class="t" style="top:477.58px;font-size:11px;color:#1c1c1c;right:629.5px;transform:scaleX(0.986);transform-origin:right;">3784.395</div>
<div class="t" style="top:477.58px;font-size:11px;color:#1c1c1c;right:571px;transform:scaleX(0.984);transform-origin:right;">0.000</div>
<div class="t" style="top:477.58px;font-size:11px;color:#1c1c1c;right:513px;transform:scaleX(0.984);transform-origin:right;">0.000</div>
<div class="t" style="top:477.58px;font-size:11px;color:#1c1c1c;right:384.5px;transform:scaleX(0.983);transform-origin:right;">2021.12.17 14:25:52</div>
<div class="t" style="top:477.58px;font-size:11px;color:#1c1c1c;right:325.5px;transform:scaleX(0.986);transform-origin:right;">3770.535</div>
<div class="t" style="top:477.58px;font-size:11px;color:#1c1c1c;right:267px;transform:scaleX(0.983);transform-origin:right;">0.00</div>
<div class="t" style="top:477.58px;font-size:11px;color:#1c1c1c;right:203px;transform:scaleX(0.983);transform-origin:right;">-1.39</div>
<div class="t" style="top:477.58px;font-size:11px;color:#1c1c1c;right:22px;transform:scaleX(0.992);transform-origin:right;">to #9207251</div>
<svg class="a" style="left:17px;top:493.45px;width:12px;height:12px;" viewBox="0 0 12 12"><path d="M0.500 0.500h6l2.500 2.500v8h-8.500z" fill="#fdfdfd" stroke="#7a7a7a" stroke-width=".9"/><path d="M6.500 0.500v2.500h2.500" fill="none" stroke="#7a7a7a" stroke-width=".7"/><circle cx="8.300" cy="8.700" r="2.900" fill="#e8452c" stroke="#a02a18" stroke-width=".5"/><circle cx="7.500" cy="7.900" r=".9" fill="#fff" opacity=".6"/></svg>
<div class="t" style="top:494.25px;font-size:11px;color:#1c1c1c;left:31.25px;transform:scaleX(0.992);transform-origin:left;">9207254</div>
<div class="t" style="top:494.25px;font-size:11px;color:#1c1c1c;right:852px;transform:scaleX(0.983);transform-origin:right;">2021.12.17 14:26:14</div>
<div class="t" style="top:494.25px;font-size:11px;color:#1c1c1c;right:793px;transform:scaleX(1.005);transform-origin:right;">sell</div>
<div class="t" style="top:494.25px;font-size:11px;color:#1c1c1c;right:747px;transform:scaleX(0.983);transform-origin:right;">2.90</div>
<div class="t" style="top:494.25px;font-size:11px;color:#1c1c1c;right:688px;transform:scaleX(0.987);transform-origin:right;">ethusd</div>
<div class="t" style="top:494.25px;font-size:11px;color:#1c1c1c;right:629.5px;transform:scaleX(0.986);transform-origin:right;">3772.355</div>
<div class="t" style="top:494.25px;font-size:11px;color:#1c1c1c;right:571px;transform:scaleX(0.986);transform-origin:right;">3936.055</div>
<div class="t" style="top:494.25px;font-size:11px;color:#1c1c1c;right:513px;transform:scaleX(0.984);transform-origin:right;">0.000</div>
<div class="t" style="top:494.25px;font-size:11px;color:#1c1c1c;right:384.5px;transform:scaleX(0.983);transform-origin:right;">2021.12.19 22:05:01</div>
<div class="t" style="top:494.25px;font-size:11px;color:#1c1c1c;right:325.5px;transform:scaleX(0.986);transform-origin:right;">3936.055</div>
<div class="t" style="top:494.25px;font-size:11px;color:#1c1c1c;right:267px;transform:scaleX(0.983);transform-origin:right;">-6.99</div>
<div class="t" style="top:494.25px;font-size:11px;color:#1c1c1c;right:203px;transform:scaleX(0.985);transform-origin:right;">-474.73</div>
<div class="t" style="top:494.25px;font-size:11px;color:#1c1c1c;right:22px;transform:scaleX(1.017);transform-origin:right;">[sl]</div>
<svg class="a" style="left:17px;top:510.12px;width:12px;height:12px;" viewBox="0 0 12 12"><path d="M0.500 0.500h6l2.500 2.500v8h-8.500z" fill="#fdfdfd" stroke="#7a7a7a" stroke-width=".9"/><path d="M6.500 0.500v2.500h2.500" fill="none" stroke="#7a7a7a" stroke-width=".7"/><circle cx="8.300" cy="8.700" r="2.900" fill="#e8452c" stroke="#a02a18" stroke-width=".5"/><circle cx="7.500" cy="7.900" r=".9" fill="#fff" opacity=".6"/></svg>
<div class="t" style="top:510.92px;font-size:11px;color:#1c1c1c;left:31.25px;transform:scaleX(0.992);transform-origin:left;">9207237</div>
<div class="t" style="top:510.92px;font-size:11px;color:#1c1c1c;right:852px;transform:scaleX(0.983);transform-origin:right;">2021.12.17 14:23:46</div>
<div class="t" style="top:510.92px;font-size:11px;color:#1c1c1c;right:793px;transform:scaleX(1.005);transform-origin:right;">sell</div>
<div class="t" style="top:510.92px;font-size:11px;color:#1c1c1c;right:747px;transform:scaleX(0.983);transform-origin:right;">4.30</div>
<div class="t" style="top:510.92px;font-size:11px;color:#1c1c1c;right:688px;transform:scaleX(0.987);transform-origin:right;">ethusd</div>
<div class="t" style="top:510.92px;font-size:11px;color:#1c1c1c;right:629.5px;transform:scaleX(0.986);transform-origin:right;">3772.285</div>
<div class="t" style="top:510.92px;font-size:11px;color:#1c1c1c;right:571px;transform:scaleX(0.986);transform-origin:right;">3932.475</div>
<div class="t" style="top:510.92px;font-size:11px;color:#1c1c1c;right:513px;transform:scaleX(0.984);transform-origin:right;">0.000</div>
<div class="t" style="top:510.92px;font-size:11px;color:#1c1c1c;right:384.5px;transform:scaleX(0.983);transform-origin:right;">2021.12.19 22:05:01</div>
<div class="t" style="top:510.92px;font-size:11px;color:#1c1c1c;right:325.5px;transform:scaleX(0.986);transform-origin:right;">3932.475</div>
<div class="t" style="top:510.92px;font-size:11px;color:#1c1c1c;right:267px;transform:scaleX(0.984);transform-origin:right;">-10.36</div>
<div class="t" style="top:510.92px;font-size:11px;color:#1c1c1c;right:203px;transform:scaleX(0.985);transform-origin:right;">-688.82</div>
<div class="t" style="top:510.92px;font-size:11px;color:#1c1c1c;right:22px;transform:scaleX(1.017);transform-origin:right;">[sl]</div>
<div class="a" style="left:1049px;top:307.5px;width:14.5px;height:220.5px;background:#f0f0f0;"></div>
<div class="a" style="left:1049px;top:376px;width:14.5px;height:16px;background:#cdcdcd;"></div>
<svg class="a" style="left:1053px;top:314px;width:7px;height:4.5px;" viewBox="0 0 7 4.5"><path d="M0.500 4l3-3 3 3" stroke="#505050" stroke-width="1.200" fill="none"/></svg>
<svg class="a" style="left:1053px;top:517.5px;width:7px;height:4.5px;" viewBox="0 0 7 4.5"><path d="M0.500 0.500l3 3 3-3" stroke="#505050" stroke-width="1.200" fill="none"/></svg>
<div class="a" style="left:1063.5px;top:307px;width:3.5px;height:238px;background:#f0f0f0;"></div>
<div class="a" style="left:12.5px;top:528px;width:1054.5px;height:17px;background:#f0f0f0;"></div>
<div class="a" style="left:88.75px;top:525.5px;width:57px;height:18px;background:#ffffff;border:1px solid #3c3c3c;border-top:none"></div>
<div class="t" style="top:531.5px;font-size:10.5px;color:#7f7f7f;left:23.75px;transform:scaleX(0.905);transform-origin:left;">交易</div>
<div class="a" style="left:52px;top:530px;width:1px;height:12px;background:#9a9a9a;"></div>
<div class="t" style="top:531.5px;font-size:10.5px;color:#7f7f7f;left:60px;transform:scaleX(0.952);transform-origin:left;">展示</div>
<div class="t" style="top:531.5px;font-size:10.5px;color:#111;left:96px;transform:scaleX(0.952);transform-origin:left;">账户历史</div>
<div class="t" style="top:531.5px;font-size:10.5px;color:#7f7f7f;left:153px;transform:scaleX(0.952);transform-origin:left;">新闻</div>
<div class="a" style="left:182px;top:530px;width:1px;height:12px;background:#9a9a9a;"></div>
<div class="t" style="top:531.5px;font-size:10.5px;color:#7f7f7f;left:189.5px;transform:scaleX(0.952);transform-origin:left;">警报</div>
<div class="a" style="left:218px;top:530px;width:1px;height:12px;background:#9a9a9a;"></div>
<div class="t" style="top:531.5px;font-size:10.5px;color:#7f7f7f;left:226px;transform:scaleX(0.952);transform-origin:left;">邮箱</div>
<div class="t" style="top:533.3px;font-size:9.5px;color:#d0202a;font-weight:bold;left:248.75px;transform:scaleX(0.926);transform-origin:left;">10</div>
<div class="a" style="left:267.5px;top:530px;width:1px;height:12px;background:#9a9a9a;"></div>
<div class="t" style="top:531.5px;font-size:10.5px;color:#7f7f7f;left:274.5px;transform:scaleX(0.929);transform-origin:left;">市场</div>
<div class="t" style="top:533.3px;font-size:9.5px;color:#d0202a;font-weight:bold;left:296.5px;transform:scaleX(0.945);transform-origin:left;">97</div>
<div class="a" style="left:315px;top:530px;width:1px;height:12px;background:#9a9a9a;"></div>
<div class="t" style="top:531.5px;font-size:10.5px;color:#7f7f7f;left:323.5px;transform:scaleX(0.929);transform-origin:left;">信号</div>
<div class="a" style="left:351.5px;top:530px;width:1px;height:12px;background:#9a9a9a;"></div>
<div class="t" style="top:531.5px;font-size:10.5px;color:#7f7f7f;left:360px;transform:scaleX(0.952);transform-origin:left;">文章</div>
<div class="a" style="left:387.5px;top:530px;width:1px;height:12px;background:#9a9a9a;"></div>
<div class="t" style="top:531.5px;font-size:10.5px;color:#7f7f7f;left:396px;transform:scaleX(0.952);transform-origin:left;">代码库</div>
<div class="a" style="left:434px;top:530px;width:1px;height:12px;background:#9a9a9a;"></div>
<div class="t" style="top:531.5px;font-size:10.5px;color:#7f7f7f;left:442.5px;transform:scaleX(0.892);transform-origin:left;">EA</div>
<div class="a" style="left:464px;top:530px;width:1px;height:12px;background:#9a9a9a;"></div>
<div class="t" style="top:531.5px;font-size:10.5px;color:#7f7f7f;left:472.5px;transform:scaleX(0.952);transform-origin:left;">日志</div>
<div class="a" style="left:501px;top:530px;width:1px;height:12px;background:#9a9a9a;"></div>
<div class="a" style="left:0px;top:546.5px;width:1067px;height:20.5px;background:#f0f0f0;border-top:1px solid #fafafa"></div>
<div class="t" style="top:553px;font-size:10.5px;color:#111;left:2px;transform:scaleX(0.936);transform-origin:left;">寻求帮助,请按F1键</div>
<div class="a" style="left:436.5px;top:549px;width:1px;height:15px;background:#d0d0d0;"></div>
<div class="t" style="top:552.5px;font-size:11px;color:#222;left:440.5px;">De</div>
<div class="t" style="top:552.5px;font-size:11px;color:#222;left:579px;transform:scaleX(0.923);transform-origin:left;">2.27 21:10</div>
<div class="a" style="left:635.5px;top:549px;width:1px;height:15px;background:#d0d0d0;"></div>
<div class="t" style="top:552.5px;font-size:11px;color:#222;left:643px;transform:scaleX(0.923);transform-origin:left;">O: 1811.61</div>
<div class="a" style="left:700px;top:549px;width:1px;height:15px;background:#d0d0d0;"></div>
<div class="t" style="top:552.5px;font-size:11px;color:#222;left:707.5px;transform:scaleX(0.938);transform-origin:left;">H: 1809.25</div>
<div class="a" style="left:765px;top:549px;width:1px;height:15px;background:#d0d0d0;"></div>
<div class="t" style="top:552.5px;font-size:11px;color:#222;left:772px;transform:scaleX(0.933);transform-origin:left;">L: 1809.00</div>
<div class="a" style="left:829.5px;top:549px;width:1px;height:15px;background:#d0d0d0;"></div>
<div class="t" style="top:552.5px;font-size:11px;color:#222;left:833px;transform:scaleX(0.929);transform-origin:left;">C: 1809.20</div>
<div class="a" style="left:893.5px;top:549px;width:1px;height:15px;background:#d0d0d0;"></div>
<div class="t" style="top:552.5px;font-size:11px;color:#222;left:897px;transform:scaleX(0.923);transform-origin:left;">V: 192</div>
<div class="a" style="left:953.5px;top:549px;width:1px;height:15px;background:#d0d0d0;"></div>
<svg class="a" style="left:957px;top:552.2px;width:21px;height:10.5px;" viewBox="0 0 21 10.5"><rect x="0" y="0" width="1.500" height="9.5" fill="#86a030"/><rect x="0" y="9.5" width="1.500" height="1" fill="#1f4f80"/><rect x="2.4" y="0" width="1.500" height="8.45" fill="#86a030"/><rect x="2.4" y="8.45" width="1.500" height="2.05" fill="#1f4f80"/><rect x="4.8" y="0" width="1.500" height="7.4" fill="#86a030"/><rect x="4.8" y="7.4" width="1.500" height="3.1" fill="#1f4f80"/><rect x="7.2" y="0" width="1.500" height="6.35" fill="#86a030"/><rect x="7.2" y="6.35" width="1.500" height="4.15" fill="#1f4f80"/><rect x="9.6" y="0" width="1.500" height="5.3" fill="#86a030"/><rect x="9.6" y="5.3" width="1.500" height="5.2" fill="#1f4f80"/><rect x="12" y="0" width="1.500" height="4.25" fill="#86a030"/><rect x="12" y="4.25" width="1.500" height="6.25" fill="#1f4f80"/><rect x="14.4" y="0" width="1.500" height="3.2" fill="#86a030"/><rect x="14.4" y="3.2" width="1.500" height="7.3" fill="#1f4f80"/><rect x="16.8" y="0" width="1.500" height="2.15" fill="#86a030"/><rect x="16.8" y="2.15" width="1.500" height="8.35" fill="#1f4f80"/><rect x="19.2" y="0" width="1.500" height="1.1" fill="#86a030"/><rect x="19.2" y="1.1" width="1.500" height="9.4" fill="#1f4f80"/></svg>
<div class="t" style="top:552.5px;font-size:11px;color:#222;left:982px;transform:scaleX(1.025);transform-origin:left;">21/0 kb</div>
<div class="a" style="left:0px;top:566.3px;width:1067px;height:33.7px;background:linear-gradient(90deg,#dcdae8 0%,#e0d9e4 35%,#e8d8dc 65%,#edd6d6 100%);"></div>
<svg class="a" style="left:13px;top:577px;width:14px;height:13px;" viewBox="0 0 14 13"><path d="M0 1.800l6-.900v5.300h-6zM7 .800l7-1v6.400h-7zM0 7.200h6v5.300l-6-.900zM7 7.200h7v6.200l-7-1z" fill="#111"/></svg>
<div class="a" style="left:40px;top:568px;width:285px;height:32px;background:#ffffff;"></div>
<svg class="a" style="left:50px;top:576px;width:14px;height:14px;" viewBox="0 0 14 14"><circle cx="8.500" cy="5.500" r="4.300" fill="none" stroke="#222" stroke-width="1.200"/><path d="M5.500 8.500l-4.500 4.800" stroke="#222" stroke-width="1.300"/></svg>
<div class="t" style="top:577.5px;font-size:12.5px;color:#333;left:73.75px;transform:scaleX(1.067);transform-origin:left;">在这里输入你要搜索的内容</div>
<svg class="a" style="left:339px;top:576.5px;width:14px;height:14px;" viewBox="0 0 14 14"><circle cx="7" cy="7" r="5.600" fill="none" stroke="#111" stroke-width="1.600"/></svg>
<svg class="a" style="left:380px;top:577px;width:13px;height:12px;" viewBox="0 0 13 12"><path d="M0.500 2.500h8v7h-8zM0.500 0.500h8M0.500 11.500h8M11 1v10M12.500 3v6" stroke="#222" stroke-width="1" fill="none"/></svg>
<div class="a" style="left:407.5px;top:574.3px;width:120.5px;height:17.5px;background:#3a3a42;"></div>
<svg class="a" style="left:410.5px;top:576px;width:11px;height:13px;" viewBox="0 0 11 13"><circle cx="5.500" cy="7" r="4.200" fill="none" stroke="#3b8de6" stroke-width="2"/><path d="M2 7h7.500" stroke="#3b8de6" stroke-width="1.500"/><path d="M1 4c2-4 8-5 9.500-2" stroke="#f0c030" stroke-width="1" fill="none"/></svg>
<div class="t" style="top:579.5px;font-size:7px;color:#8c8c96;left:428px;transform:scaleX(0.976);transform-origin:left;">客户管理系统</div>
<svg class="a" style="left:517px;top:578px;width:10px;height:10px;" viewBox="0 0 10 10"><circle cx="4" cy="4" r="3.200" fill="none" stroke="#777" stroke-width="1"/><path d="M6.500 6.500l3 3" stroke="#777" stroke-width="1"/></svg>
<svg class="a" style="left:544px;top:574px;width:18px;height:19px;" viewBox="0 0 18 19"><circle cx="9" cy="10" r="6.500" fill="none" stroke="#5dbb2d" stroke-width="3.400"/><path d="M3 10h12" stroke="#5dbb2d" stroke-width="2.600"/><rect x="10" y="11.300" width="7" height="3" fill="#e6d8de"/><path d="M1.500 6c3-6 12-7 15-2" stroke="#f2c81e" stroke-width="1.600" fill="none"/></svg>
<svg class="a" style="left:585.5px;top:573.5px;width:19px;height:19px;" viewBox="0 0 19 19"><circle cx="9.500" cy="9.500" r="9.200" fill="#e33b2e"/><path d="M9.500 9.500L1.600 5A9.200 9.200 0 0 0 9 18.700z" fill="#2da94f"/><path d="M9.500 9.500L9 18.700A9.200 9.200 0 0 0 17.600 5z" fill="#fcc31e"/><circle cx="9.500" cy="9.500" r="4.200" fill="#fff"/><circle cx="9.500" cy="9.500" r="3.300" fill="#4a8af4"/></svg>
<svg class="a" style="left:626px;top:575px;width:22px;height:17px;" viewBox="0 0 22 17"><ellipse cx="8" cy="6.500" rx="7.500" ry="6" fill="#5ac83a"/><path d="M3.500 11l-1 3 3.500-2z" fill="#5ac83a"/><ellipse cx="15" cy="11" rx="6.300" ry="5" fill="#f4f4f4"/><path d="M18.500 15l1 2.300-3-1.500z" fill="#f4f4f4"/><circle cx="5.500" cy="5" r=".9" fill="#2a7a18"/><circle cx="10.500" cy="5" r=".9" fill="#2a7a18"/><circle cx="13" cy="10" r=".8" fill="#777"/><circle cx="17" cy="10" r=".8" fill="#777"/></svg>
<div class="a" style="left:658px;top:567px;width:40.3px;height:33px;background:#f3e8ec;"></div>
<svg class="a" style="left:668.8px;top:573.5px;width:18.2px;height:19.3px;" viewBox="0 0 18.2 19.3"><path d="M9.10 1.55L16.11 5.60L16.11 13.70L9.10 17.75L2.09 13.70L2.09 5.60z" fill="#fff" stroke="#1f4a8c" stroke-width="3.1" stroke-linejoin="round"/><path d="M7.60 12.05L3.16 19.15" stroke="#f3e8ec" stroke-width="2.945"/><path d="M7.60 12.05L5.55 15.34" stroke="#fff" stroke-width="2.945"/><circle cx="9.1" cy="9.65" r="2.4125" fill="#2b82d9"/></svg>
<div class="a" style="left:578px;top:598px;width:37.5px;height:2px;background:#2f7fd6;"></div>
<div class="a" style="left:619px;top:598px;width:37px;height:2px;background:#2f7fd6;"></div>
<div class="a" style="left:658.5px;top:598px;width:39.5px;height:2px;background:#2f7fd6;"></div>
<svg class="a" style="left:762px;top:579px;width:10px;height:6px;" viewBox="0 0 10 6"><path d="M0.500 5.500l4.500-4.500 4.500 4.500" stroke="#222" stroke-width="1.200" fill="none"/></svg>
<svg class="a" style="left:779.5px;top:575.5px;width:15px;height:15px;" viewBox="0 0 15 15"><circle cx="7.500" cy="7.500" r="7" fill="#f5d21e"/><circle cx="7.500" cy="7.500" r="5.300" fill="#35b045"/><path d="M4.500 7.500h6M7.500 4.500v6" stroke="#fff" stroke-width="1.600"/></svg>
<div class="t" style="top:577px;font-size:12px;color:#ffffff;font-weight:bold;left:799px;transform:scaleX(1.070);transform-origin:left;letter-spacing:-.3px;">mi</div>
<svg class="a" style="left:820px;top:579px;width:15px;height:8px;" viewBox="0 0 15 8"><rect x="0.500" y="0.500" width="12.500" height="7" fill="#111" stroke="#111"/><rect x="13.500" y="2.500" width="1.300" height="3" fill="#111"/></svg>
<svg class="a" style="left:841.5px;top:577px;width:12px;height:11px;" viewBox="0 0 12 11"><path d="M1 10.500a9.500 9.500 0 0 1 9.500-9.500" stroke="#555" stroke-width="1" fill="none"/><path d="M4 10.500a6.500 6.500 0 0 1 6.500-6.500" stroke="#555" stroke-width="1" fill="none"/><path d="M7 10.500a3.500 3.500 0 0 1 3.500-3.500" stroke="#555" stroke-width="1" fill="none"/><circle cx="10" cy="10" r="1" fill="#555"/></svg>
<svg class="a" style="left:860.5px;top:577px;width:12px;height:11px;" viewBox="0 0 12 11"><path d="M0.500 3.500h2.500l3-3v10l-3-3h-2.500z" fill="none" stroke="#444" stroke-width="1"/><path d="M8 3.500c1 1 1 3 0 4M9.800 2c2 2 2 5 0 7" stroke="#777" stroke-width=".9" fill="none"/></svg>
<div class="t" style="top:577px;font-size:12.5px;color:#8a8288;left:879px;transform:scaleX(1.039);transform-origin:left;">中</div>
<svg class="a" style="left:903.5px;top:576px;width:15px;height:14px;" viewBox="0 0 15 14"><rect x="0" y="0" width="15" height="14" rx="3" fill="#f0562a" transform="rotate(-8 7.500 7)"/></svg>
<div class="t" style="top:576.5px;font-size:12.5px;color:#ffffff;font-weight:bold;left:907px;transform:scaleX(1.019);transform-origin:left;">S</div>
<div class="t" style="top:571.5px;font-size:11px;color:#1a1a1a;left:932.7px;transform:scaleX(0.932);transform-origin:left;">13:45 周二</div>
<div class="t" style="top:584px;font-size:11px;color:#1a1a1a;left:928px;transform:scaleX(1.053);transform-origin:left;">2021/12/28</div>
<svg class="a" style="left:999px;top:576px;width:21px;height:18px;" viewBox="0 0 21 18"><rect x="0.500" y="0.500" width="13" height="14" fill="#222"/><path d="M3 4h8M3 7h8M3 10h5" stroke="#eee" stroke-width="1"/><rect x="10.500" y="8.500" width="10" height="9.500" rx="1" fill="#e02020"/><text x="15.500" y="16" font-size="7" fill="#fff" text-anchor="middle">4</text></svg>
<svg class="a" style="left:1032px;top:577px;width:15px;height:14px;" viewBox="0 0 15 14"><path d="M0.500 0.500h13.500v9.500h-5l-3 3v-3h-5.500z" fill="none" stroke="#222" stroke-width="1"/></svg>
<div class="a" style="left:1063px;top:567px;width:1px;height:33px;background:#b9a9ad;"></div>
<div class="a" style="left:448px;top:544.8px;width:128px;height:20.8px;background:#f6fafe;border-radius:2px"></div>
<svg class="a" style="left:448px;top:541.5px;width:26px;height:26px;" viewBox="0 0 26 26"><rect x="3" y="3" width="20" height="20" rx="4.500" fill="#f15a29" transform="rotate(-13 13 13)"/></svg>
<div class="t" style="left:453.500px;top:543.500px;font-size:21.500px;font-weight:bold;color:#fff;transform:rotate(-13deg) skewX(-8deg) scaleX(1.05);transform-origin:center">S</div>
<div class="t" style="top:550px;font-size:12.5px;color:#1a6fd8;font-weight:bold;left:479.5px;">中</div>
<svg class="a" style="left:502px;top:551px;width:8px;height:9px;" viewBox="0 0 8 9"><circle cx="1.800" cy="1.800" r="1.300" fill="none" stroke="#1a6fd8" stroke-width="1"/><path d="M6 5.500c1 1 .5 2.500-1 3.200" stroke="#1a6fd8" stroke-width="1.300" fill="none"/><circle cx="6" cy="5.500" r="1" fill="#1a6fd8"/></svg>
<svg class="a" style="left:520.5px;top:548.5px;width:10px;height:14px;" viewBox="0 0 10 14"><rect x="3" y="0.500" width="4" height="8" rx="2" fill="#1a6fd8"/><path d="M1 6.500c0 5 8 5 8 0M5 10.500v2.500" stroke="#1a6fd8" stroke-width="1.200" fill="none"/></svg>
<svg class="a" style="left:539.5px;top:550.5px;width:13px;height:10px;" viewBox="0 0 13 10"><rect x="0.500" y="0.500" width="12" height="9" rx="1.500" fill="#1a6fd8"/><path d="M2.500 3h1M5 3h1M7.500 3h1M10 3h.700M2.500 5h1M5 5h1M7.500 5h1M10 5h.700M4 7.300h5" stroke="#fff" stroke-width="1"/></svg>
<svg class="a" style="left:560.5px;top:550px;width:11px;height:11px;" viewBox="0 0 11 11"><rect x="0" y="0" width="4.700" height="4.700" rx="1.200" fill="#1a6fd8"/><rect x="6.300" y="0" width="4.700" height="4.700" rx="2.300" fill="#1a6fd8"/><rect x="0" y="6.300" width="4.700" height="4.700" rx="1.200" fill="#1a6fd8"/><rect x="6.300" y="6.300" width="4.700" height="4.700" rx="1.200" fill="#1a6fd8"/></svg>
</div></body></html>
